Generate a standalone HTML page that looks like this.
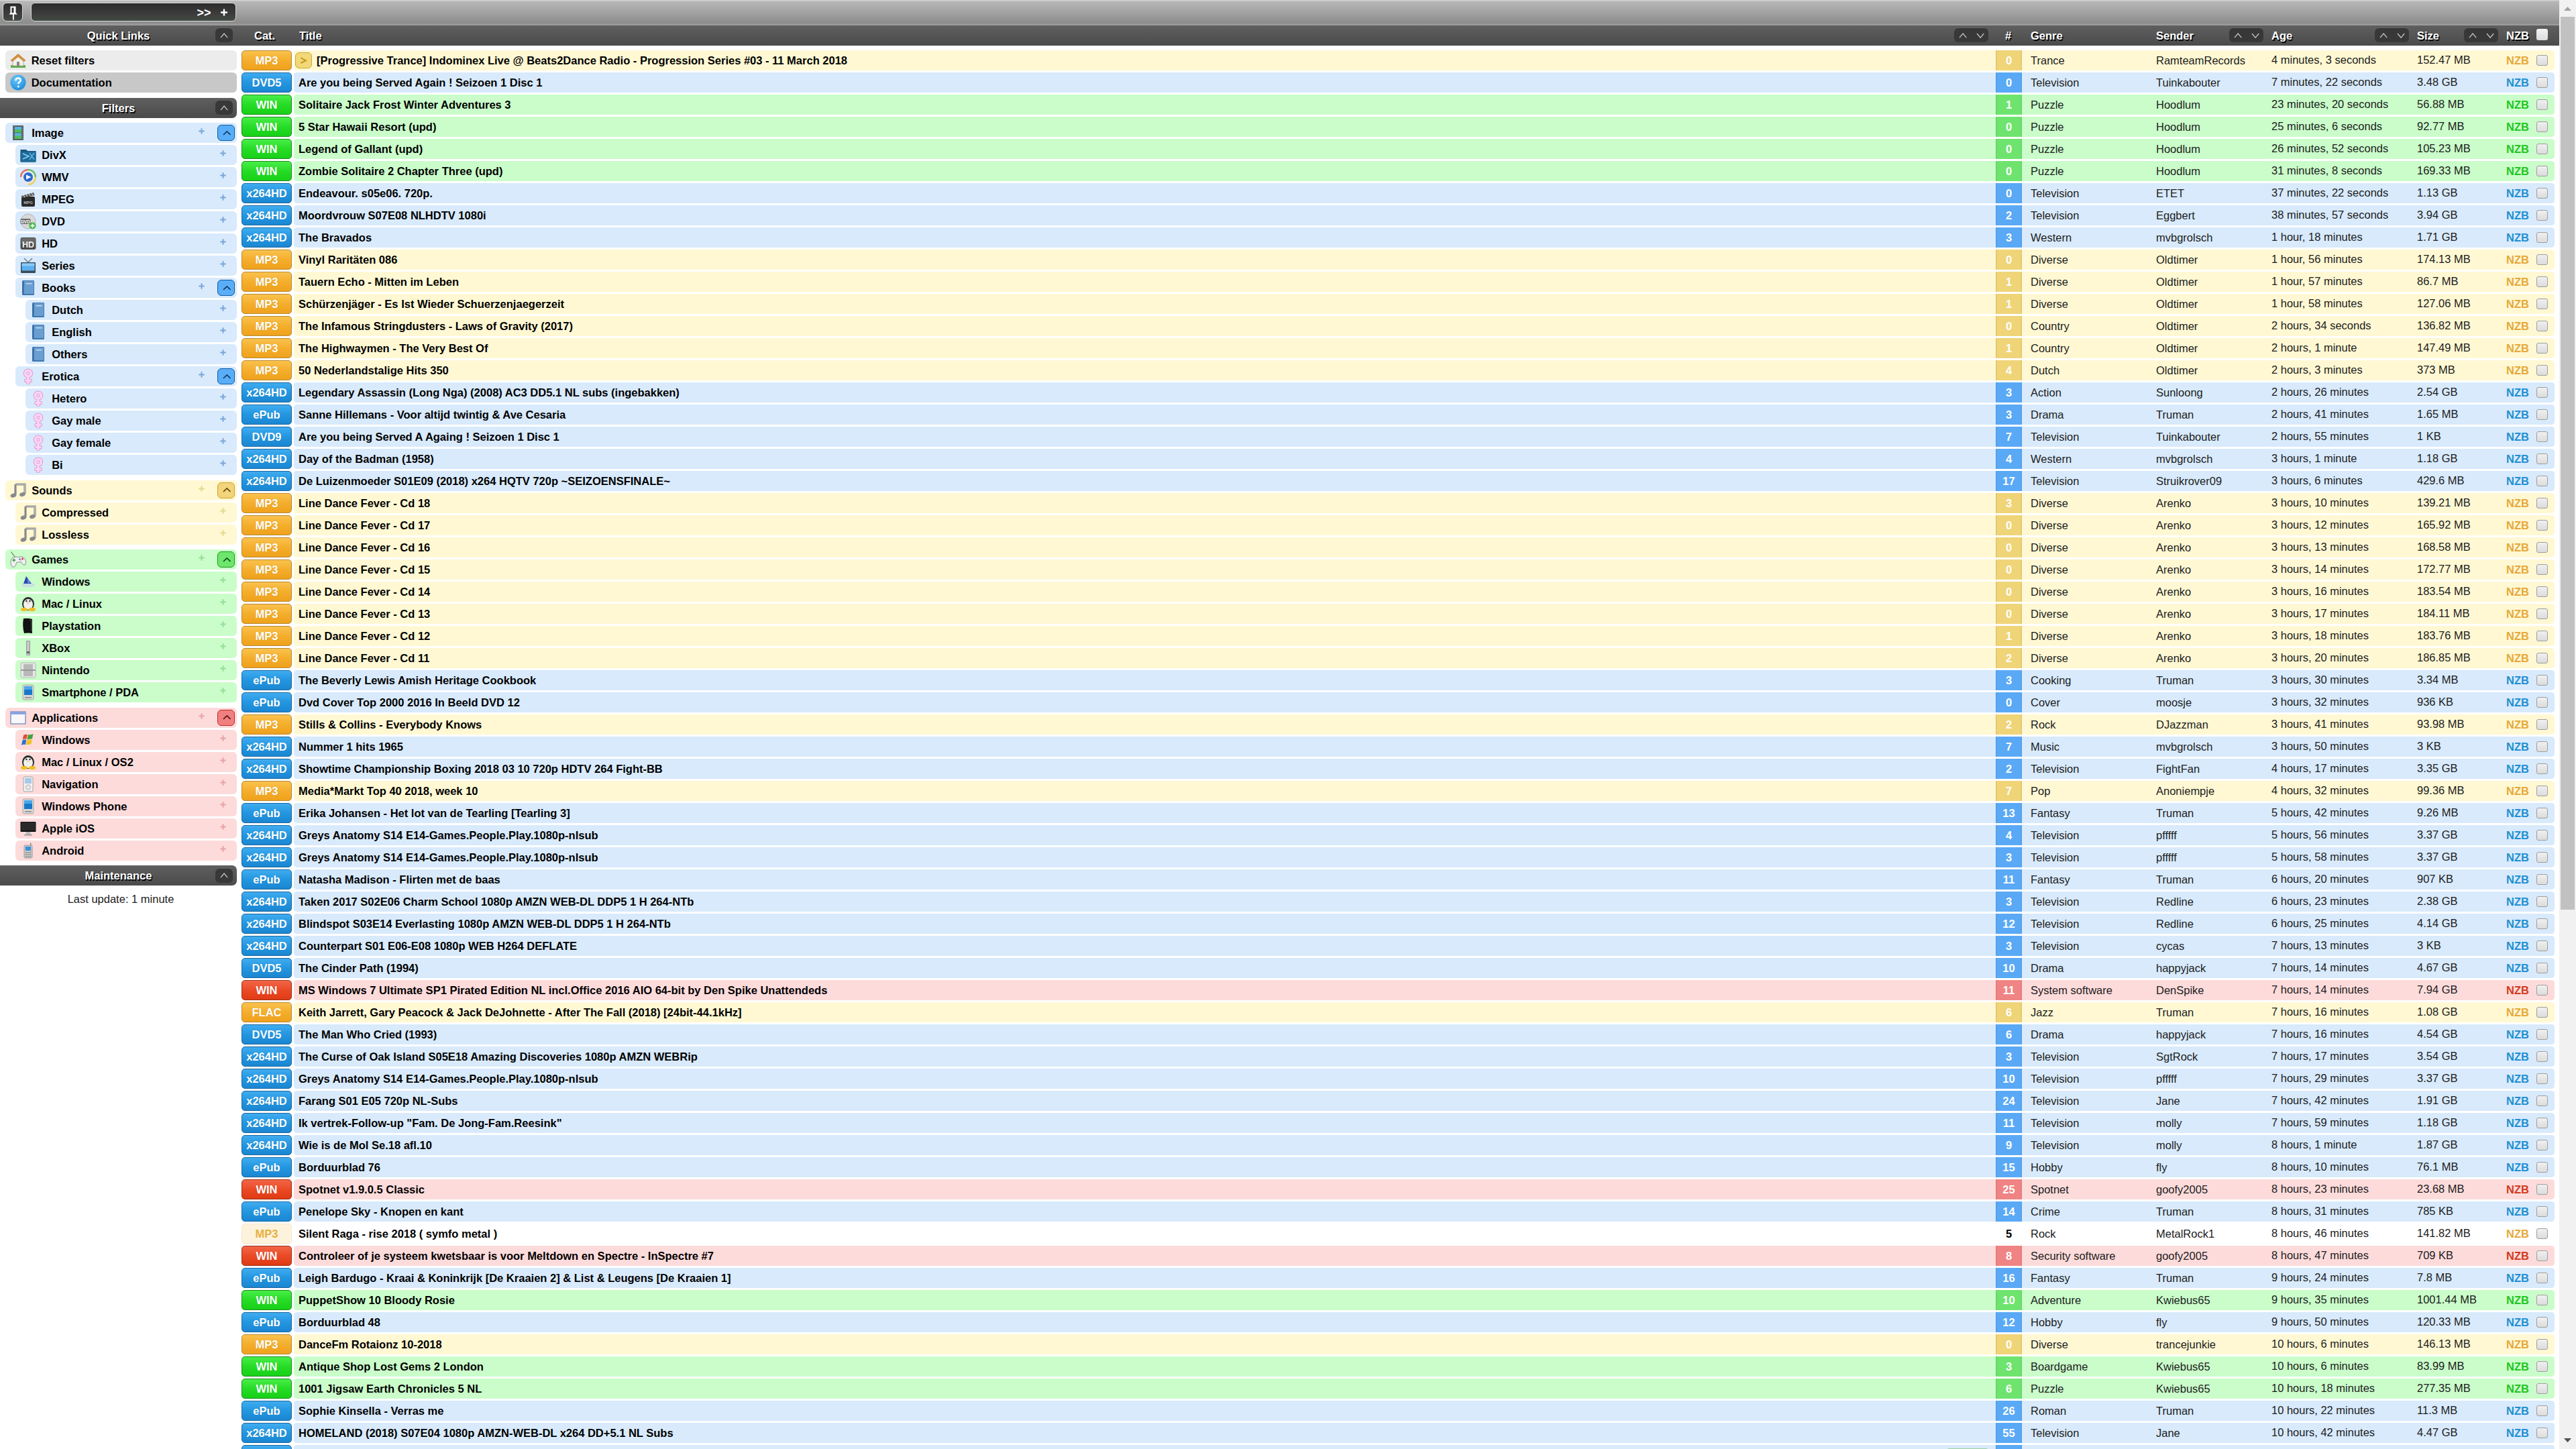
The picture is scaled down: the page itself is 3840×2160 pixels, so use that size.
<!DOCTYPE html><html><head><meta charset="utf-8"><style>
html,body{margin:0;padding:0;width:3840px;height:2160px;overflow:hidden;background:#fff;font-family:"Liberation Sans",sans-serif;}
.a{position:absolute}
#top{left:0;top:0;width:3815px;height:38px;background:linear-gradient(#dedede 0px,#b8b8b8 2px,#8c8c8c 35px,#9c9c9c 36px,#9a9a9a 38px)}
.tb{background:linear-gradient(#2c2c2c,#3c3c3c 60%,#434b43);border:1.5px solid #d4d6d4;border-radius:6px;box-sizing:border-box}
#hdr{left:0;top:38px;width:3815px;height:30px;background:linear-gradient(#5f5f5f,#4b4b4b)}
.ht{font-weight:bold;font-size:16.5px;line-height:30px;color:#fff;text-shadow:1.5px 1.5px 0 #000;white-space:nowrap}
.sb{background:#383838;border-radius:6px;height:21px;top:42px}
.row{height:30px;border-radius:4.5px}
.t{font-size:16.5px;line-height:30px;white-space:nowrap;color:#000}
.tt{font-weight:bold}
.rt{color:#1c1c1c}
.bdg{left:360px;width:75px;height:30px;box-sizing:border-box;border-radius:5px;border:1.5px solid;text-align:center;font-weight:bold;font-size:16.5px;line-height:29px;color:#fff;text-shadow:0 0 1px rgba(0,0,0,.2)}
.bo{background:linear-gradient(#fac24e,#f4ae2c 50%,#efa11c);border-color:#b88a34}
.bb{background:linear-gradient(#40acf0,#2396e0 50%,#1b86d2);border-color:#1a68a0}
.bg{background:linear-gradient(#48ee48,#26dc26 50%,#18d018);border-color:#1c8c1c}
.br{background:linear-gradient(#f26648,#ea4a26 50%,#e03a12);border-color:#9c3018}
.bw{background:#fdf2dc;border-color:#f5e6c8;color:#e8b040;text-shadow:none}
.num{left:2975px;width:39px;height:30px;text-align:center;font-weight:bold;font-size:16.5px;line-height:30px;color:#fff;box-shadow:inset 1.5px 0 rgba(0,0,0,.07),inset -1.5px 0 rgba(0,0,0,.07)}
.nzb{left:3736px;font-weight:bold;font-size:16.5px;line-height:30px}
.cb{left:3781px;width:16.5px;height:16.5px;box-sizing:border-box;border:1.5px solid #9e9e9e;border-radius:3px;background:linear-gradient(#f0f0f0,#dcdcdc)}
.si{height:30px;border-radius:6px}
.st{font-weight:bold;font-size:16.5px;line-height:30px;color:#000;white-space:nowrap}
.ic{width:24px;height:24px}
.ic svg{display:block}
.plus{width:10px;height:10px}
.gbtn{width:26px;height:24px;box-sizing:border-box;border:1.8px solid;border-radius:6px}
.sh{background:linear-gradient(#5f5f5f,#4b4b4b);height:30px}
</style></head><body><div class="a" id="top"></div>
<div class="a tb" style="left:4px;top:4px;width:30px;height:28px"></div>
<svg class="a" style="left:12px;top:8px" width="16" height="22" viewBox="0 0 16 22"><path d="M3.5 1.5 H11.5 V11 L14 13.5 H1.5 L3.5 11Z" fill="#fff"/><rect x="5.5" y="3.5" width="3" height="7.5" fill="#333"/><rect x="7" y="13" width="1.8" height="8.5" fill="#fff"/></svg>
<div class="a tb" style="left:46px;top:4px;width:306px;height:28px"></div>
<div class="a" style="left:293.5px;top:5px;font-weight:bold;font-size:18px;line-height:28px;color:#fff">&gt;&gt;</div>
<svg class="a" style="left:328px;top:13px" width="12" height="11" viewBox="0 0 12 11"><path d="M6 0.5 V10.5 M1 5.5 H11" stroke="#fff" stroke-width="2.4"/></svg>
<div class="a" id="hdr"></div>
<div class="a ht" style="left:0;top:38px;width:353px;text-align:center">Quick Links</div>
<div class="a sb" style="left:321px;width:26px"></div>
<svg class="a" style="left:327.8px;top:48.6px" width="12.2" height="8.2" viewBox="-1 -1 12.2 8.2"><path d="M0 6.2 L5.1 0 L10.2 6.2" fill="none" stroke="#c4c4c4" stroke-width="1.3"/></svg>
<div class="a ht" style="left:379px;top:38px">Cat.</div>
<div class="a ht" style="left:446px;top:38px">Title</div>
<div class="a sb" style="left:2913px;width:51px"></div>
<svg class="a" style="left:2919.5px;top:48.6px" width="12.3" height="8.2" viewBox="-1 -1 12.3 8.2"><path d="M0 6.2 L5.15 0 L10.3 6.2" fill="none" stroke="#c4c4c4" stroke-width="1.3"/></svg>
<svg class="a" style="left:2946px;top:48.6px" width="12.3" height="8.2" viewBox="-1 -1 12.3 8.2"><path d="M0 0 L5.15 6.2 L10.3 0" fill="none" stroke="#c4c4c4" stroke-width="1.3"/></svg>
<div class="a sb" style="left:3323px;width:51px"></div>
<svg class="a" style="left:3329.5px;top:48.6px" width="12.3" height="8.2" viewBox="-1 -1 12.3 8.2"><path d="M0 6.2 L5.15 0 L10.3 6.2" fill="none" stroke="#c4c4c4" stroke-width="1.3"/></svg>
<svg class="a" style="left:3356px;top:48.6px" width="12.3" height="8.2" viewBox="-1 -1 12.3 8.2"><path d="M0 0 L5.15 6.2 L10.3 0" fill="none" stroke="#c4c4c4" stroke-width="1.3"/></svg>
<div class="a sb" style="left:3540px;width:51px"></div>
<svg class="a" style="left:3546.5px;top:48.6px" width="12.3" height="8.2" viewBox="-1 -1 12.3 8.2"><path d="M0 6.2 L5.15 0 L10.3 6.2" fill="none" stroke="#c4c4c4" stroke-width="1.3"/></svg>
<svg class="a" style="left:3573px;top:48.6px" width="12.3" height="8.2" viewBox="-1 -1 12.3 8.2"><path d="M0 0 L5.15 6.2 L10.3 0" fill="none" stroke="#c4c4c4" stroke-width="1.3"/></svg>
<div class="a sb" style="left:3673px;width:51px"></div>
<svg class="a" style="left:3679.5px;top:48.6px" width="12.3" height="8.2" viewBox="-1 -1 12.3 8.2"><path d="M0 6.2 L5.15 0 L10.3 6.2" fill="none" stroke="#c4c4c4" stroke-width="1.3"/></svg>
<svg class="a" style="left:3706px;top:48.6px" width="12.3" height="8.2" viewBox="-1 -1 12.3 8.2"><path d="M0 0 L5.15 6.2 L10.3 0" fill="none" stroke="#c4c4c4" stroke-width="1.3"/></svg>
<div class="a ht" style="left:2989px;top:38px">#</div>
<div class="a ht" style="left:3027px;top:38px">Genre</div>
<div class="a ht" style="left:3214px;top:38px">Sender</div>
<div class="a ht" style="left:3386px;top:38px">Age</div>
<div class="a ht" style="left:3603px;top:38px">Size</div>
<div class="a ht" style="left:3736px;top:38px">NZB</div>
<div class="a" style="left:3781px;top:43px;width:16.5px;height:16.5px;border-radius:3px;background:linear-gradient(#f4f4f4,#dadada)"></div>
<div class="a row" style="left:438px;top:75px;width:3370px;background:#fff8d3"></div>
<div class="a bdg bo" style="top:75px">MP3</div>
<div class="a" style="left:440px;top:78px;width:25px;height:24px;box-sizing:border-box;border:1.5px solid #c9a92a;border-radius:6px;background:#f2d878"></div>
<svg class="a" style="left:446px;top:84px" width="13" height="12" viewBox="0 0 13 12"><path d="M2.4 2.4 L10 6.2 L2.4 10" fill="none" stroke="#c39a1e" stroke-width="2"/></svg>
<div class="a t tt" style="left:472px;top:75px">[Progressive Trance] Indominex Live @ Beats2Dance Radio - Progression Series #03 - 11 March 2018</div>
<div class="a num" style="top:75px;background:#f0d478">0</div>
<div class="a t rt" style="left:3027px;top:75px">Trance</div>
<div class="a t rt" style="left:3214px;top:75px">RamteamRecords</div>
<div class="a t rt" style="left:3386px;top:74px">4 minutes, 3 seconds</div>
<div class="a t rt" style="left:3603px;top:74px">152.47 MB</div>
<div class="a nzb" style="top:75px;color:#e6a83a">NZB</div>
<div class="a cb" style="top:81.5px"></div>
<div class="a row" style="left:438px;top:108px;width:3370px;background:#d8eafc"></div>
<div class="a bdg bb" style="top:108px">DVD5</div>
<div class="a t tt" style="left:445px;top:108px">Are you being Served Again ! Seizoen 1 Disc 1</div>
<div class="a num" style="top:108px;background:#5aa9f6">0</div>
<div class="a t rt" style="left:3027px;top:108px">Television</div>
<div class="a t rt" style="left:3214px;top:108px">Tuinkabouter</div>
<div class="a t rt" style="left:3386px;top:107px">7 minutes, 22 seconds</div>
<div class="a t rt" style="left:3603px;top:107px">3.48 GB</div>
<div class="a nzb" style="top:108px;color:#1f8fd2">NZB</div>
<div class="a cb" style="top:114.5px"></div>
<div class="a row" style="left:438px;top:141px;width:3370px;background:#cafdca"></div>
<div class="a bdg bg" style="top:141px">WIN</div>
<div class="a t tt" style="left:445px;top:141px">Solitaire Jack Frost Winter Adventures 3</div>
<div class="a num" style="top:141px;background:#6ee46e">1</div>
<div class="a t rt" style="left:3027px;top:141px">Puzzle</div>
<div class="a t rt" style="left:3214px;top:141px">Hoodlum</div>
<div class="a t rt" style="left:3386px;top:140px">23 minutes, 20 seconds</div>
<div class="a t rt" style="left:3603px;top:140px">56.88 MB</div>
<div class="a nzb" style="top:141px;color:#21c621">NZB</div>
<div class="a cb" style="top:147.5px"></div>
<div class="a row" style="left:438px;top:174px;width:3370px;background:#cafdca"></div>
<div class="a bdg bg" style="top:174px">WIN</div>
<div class="a t tt" style="left:445px;top:174px">5 Star Hawaii Resort (upd)</div>
<div class="a num" style="top:174px;background:#6ee46e">0</div>
<div class="a t rt" style="left:3027px;top:174px">Puzzle</div>
<div class="a t rt" style="left:3214px;top:174px">Hoodlum</div>
<div class="a t rt" style="left:3386px;top:173px">25 minutes, 6 seconds</div>
<div class="a t rt" style="left:3603px;top:173px">92.77 MB</div>
<div class="a nzb" style="top:174px;color:#21c621">NZB</div>
<div class="a cb" style="top:180.5px"></div>
<div class="a row" style="left:438px;top:207px;width:3370px;background:#cafdca"></div>
<div class="a bdg bg" style="top:207px">WIN</div>
<div class="a t tt" style="left:445px;top:207px">Legend of Gallant (upd)</div>
<div class="a num" style="top:207px;background:#6ee46e">0</div>
<div class="a t rt" style="left:3027px;top:207px">Puzzle</div>
<div class="a t rt" style="left:3214px;top:207px">Hoodlum</div>
<div class="a t rt" style="left:3386px;top:206px">26 minutes, 52 seconds</div>
<div class="a t rt" style="left:3603px;top:206px">105.23 MB</div>
<div class="a nzb" style="top:207px;color:#21c621">NZB</div>
<div class="a cb" style="top:213.5px"></div>
<div class="a row" style="left:438px;top:240px;width:3370px;background:#cafdca"></div>
<div class="a bdg bg" style="top:240px">WIN</div>
<div class="a t tt" style="left:445px;top:240px">Zombie Solitaire 2 Chapter Three (upd)</div>
<div class="a num" style="top:240px;background:#6ee46e">0</div>
<div class="a t rt" style="left:3027px;top:240px">Puzzle</div>
<div class="a t rt" style="left:3214px;top:240px">Hoodlum</div>
<div class="a t rt" style="left:3386px;top:239px">31 minutes, 8 seconds</div>
<div class="a t rt" style="left:3603px;top:239px">169.33 MB</div>
<div class="a nzb" style="top:240px;color:#21c621">NZB</div>
<div class="a cb" style="top:246.5px"></div>
<div class="a row" style="left:438px;top:273px;width:3370px;background:#d8eafc"></div>
<div class="a bdg bb" style="top:273px">x264HD</div>
<div class="a t tt" style="left:445px;top:273px">Endeavour. s05e06. 720p.</div>
<div class="a num" style="top:273px;background:#5aa9f6">0</div>
<div class="a t rt" style="left:3027px;top:273px">Television</div>
<div class="a t rt" style="left:3214px;top:273px">ETET</div>
<div class="a t rt" style="left:3386px;top:272px">37 minutes, 22 seconds</div>
<div class="a t rt" style="left:3603px;top:272px">1.13 GB</div>
<div class="a nzb" style="top:273px;color:#1f8fd2">NZB</div>
<div class="a cb" style="top:279.5px"></div>
<div class="a row" style="left:438px;top:306px;width:3370px;background:#d8eafc"></div>
<div class="a bdg bb" style="top:306px">x264HD</div>
<div class="a t tt" style="left:445px;top:306px">Moordvrouw S07E08 NLHDTV 1080i</div>
<div class="a num" style="top:306px;background:#5aa9f6">2</div>
<div class="a t rt" style="left:3027px;top:306px">Television</div>
<div class="a t rt" style="left:3214px;top:306px">Eggbert</div>
<div class="a t rt" style="left:3386px;top:305px">38 minutes, 57 seconds</div>
<div class="a t rt" style="left:3603px;top:305px">3.94 GB</div>
<div class="a nzb" style="top:306px;color:#1f8fd2">NZB</div>
<div class="a cb" style="top:312.5px"></div>
<div class="a row" style="left:438px;top:339px;width:3370px;background:#d8eafc"></div>
<div class="a bdg bb" style="top:339px">x264HD</div>
<div class="a t tt" style="left:445px;top:339px">The Bravados</div>
<div class="a num" style="top:339px;background:#5aa9f6">3</div>
<div class="a t rt" style="left:3027px;top:339px">Western</div>
<div class="a t rt" style="left:3214px;top:339px">mvbgrolsch</div>
<div class="a t rt" style="left:3386px;top:338px">1 hour, 18 minutes</div>
<div class="a t rt" style="left:3603px;top:338px">1.71 GB</div>
<div class="a nzb" style="top:339px;color:#1f8fd2">NZB</div>
<div class="a cb" style="top:345.5px"></div>
<div class="a row" style="left:438px;top:372px;width:3370px;background:#fff8d3"></div>
<div class="a bdg bo" style="top:372px">MP3</div>
<div class="a t tt" style="left:445px;top:372px">Vinyl Raritäten 086</div>
<div class="a num" style="top:372px;background:#f0d478">0</div>
<div class="a t rt" style="left:3027px;top:372px">Diverse</div>
<div class="a t rt" style="left:3214px;top:372px">Oldtimer</div>
<div class="a t rt" style="left:3386px;top:371px">1 hour, 56 minutes</div>
<div class="a t rt" style="left:3603px;top:371px">174.13 MB</div>
<div class="a nzb" style="top:372px;color:#e6a83a">NZB</div>
<div class="a cb" style="top:378.5px"></div>
<div class="a row" style="left:438px;top:405px;width:3370px;background:#fff8d3"></div>
<div class="a bdg bo" style="top:405px">MP3</div>
<div class="a t tt" style="left:445px;top:405px">Tauern Echo - Mitten im Leben</div>
<div class="a num" style="top:405px;background:#f0d478">1</div>
<div class="a t rt" style="left:3027px;top:405px">Diverse</div>
<div class="a t rt" style="left:3214px;top:405px">Oldtimer</div>
<div class="a t rt" style="left:3386px;top:404px">1 hour, 57 minutes</div>
<div class="a t rt" style="left:3603px;top:404px">86.7 MB</div>
<div class="a nzb" style="top:405px;color:#e6a83a">NZB</div>
<div class="a cb" style="top:411.5px"></div>
<div class="a row" style="left:438px;top:438px;width:3370px;background:#fff8d3"></div>
<div class="a bdg bo" style="top:438px">MP3</div>
<div class="a t tt" style="left:445px;top:438px">Schürzenjäger - Es Ist Wieder Schuerzenjaegerzeit</div>
<div class="a num" style="top:438px;background:#f0d478">1</div>
<div class="a t rt" style="left:3027px;top:438px">Diverse</div>
<div class="a t rt" style="left:3214px;top:438px">Oldtimer</div>
<div class="a t rt" style="left:3386px;top:437px">1 hour, 58 minutes</div>
<div class="a t rt" style="left:3603px;top:437px">127.06 MB</div>
<div class="a nzb" style="top:438px;color:#e6a83a">NZB</div>
<div class="a cb" style="top:444.5px"></div>
<div class="a row" style="left:438px;top:471px;width:3370px;background:#fff8d3"></div>
<div class="a bdg bo" style="top:471px">MP3</div>
<div class="a t tt" style="left:445px;top:471px">The Infamous Stringdusters - Laws of Gravity (2017)</div>
<div class="a num" style="top:471px;background:#f0d478">0</div>
<div class="a t rt" style="left:3027px;top:471px">Country</div>
<div class="a t rt" style="left:3214px;top:471px">Oldtimer</div>
<div class="a t rt" style="left:3386px;top:470px">2 hours, 34 seconds</div>
<div class="a t rt" style="left:3603px;top:470px">136.82 MB</div>
<div class="a nzb" style="top:471px;color:#e6a83a">NZB</div>
<div class="a cb" style="top:477.5px"></div>
<div class="a row" style="left:438px;top:504px;width:3370px;background:#fff8d3"></div>
<div class="a bdg bo" style="top:504px">MP3</div>
<div class="a t tt" style="left:445px;top:504px">The Highwaymen - The Very Best Of</div>
<div class="a num" style="top:504px;background:#f0d478">1</div>
<div class="a t rt" style="left:3027px;top:504px">Country</div>
<div class="a t rt" style="left:3214px;top:504px">Oldtimer</div>
<div class="a t rt" style="left:3386px;top:503px">2 hours, 1 minute</div>
<div class="a t rt" style="left:3603px;top:503px">147.49 MB</div>
<div class="a nzb" style="top:504px;color:#e6a83a">NZB</div>
<div class="a cb" style="top:510.5px"></div>
<div class="a row" style="left:438px;top:537px;width:3370px;background:#fff8d3"></div>
<div class="a bdg bo" style="top:537px">MP3</div>
<div class="a t tt" style="left:445px;top:537px">50 Nederlandstalige Hits 350</div>
<div class="a num" style="top:537px;background:#f0d478">4</div>
<div class="a t rt" style="left:3027px;top:537px">Dutch</div>
<div class="a t rt" style="left:3214px;top:537px">Oldtimer</div>
<div class="a t rt" style="left:3386px;top:536px">2 hours, 3 minutes</div>
<div class="a t rt" style="left:3603px;top:536px">373 MB</div>
<div class="a nzb" style="top:537px;color:#e6a83a">NZB</div>
<div class="a cb" style="top:543.5px"></div>
<div class="a row" style="left:438px;top:570px;width:3370px;background:#d8eafc"></div>
<div class="a bdg bb" style="top:570px">x264HD</div>
<div class="a t tt" style="left:445px;top:570px">Legendary Assassin (Long Nga) (2008) AC3 DD5.1 NL subs (ingebakken)</div>
<div class="a num" style="top:570px;background:#5aa9f6">3</div>
<div class="a t rt" style="left:3027px;top:570px">Action</div>
<div class="a t rt" style="left:3214px;top:570px">Sunloong</div>
<div class="a t rt" style="left:3386px;top:569px">2 hours, 26 minutes</div>
<div class="a t rt" style="left:3603px;top:569px">2.54 GB</div>
<div class="a nzb" style="top:570px;color:#1f8fd2">NZB</div>
<div class="a cb" style="top:576.5px"></div>
<div class="a row" style="left:438px;top:603px;width:3370px;background:#d8eafc"></div>
<div class="a bdg bb" style="top:603px">ePub</div>
<div class="a t tt" style="left:445px;top:603px">Sanne Hillemans - Voor altijd twintig &amp; Ave Cesaria</div>
<div class="a num" style="top:603px;background:#5aa9f6">3</div>
<div class="a t rt" style="left:3027px;top:603px">Drama</div>
<div class="a t rt" style="left:3214px;top:603px">Truman</div>
<div class="a t rt" style="left:3386px;top:602px">2 hours, 41 minutes</div>
<div class="a t rt" style="left:3603px;top:602px">1.65 MB</div>
<div class="a nzb" style="top:603px;color:#1f8fd2">NZB</div>
<div class="a cb" style="top:609.5px"></div>
<div class="a row" style="left:438px;top:636px;width:3370px;background:#d8eafc"></div>
<div class="a bdg bb" style="top:636px">DVD9</div>
<div class="a t tt" style="left:445px;top:636px">Are you being Served A Againg ! Seizoen 1 Disc 1</div>
<div class="a num" style="top:636px;background:#5aa9f6">7</div>
<div class="a t rt" style="left:3027px;top:636px">Television</div>
<div class="a t rt" style="left:3214px;top:636px">Tuinkabouter</div>
<div class="a t rt" style="left:3386px;top:635px">2 hours, 55 minutes</div>
<div class="a t rt" style="left:3603px;top:635px">1 KB</div>
<div class="a nzb" style="top:636px;color:#1f8fd2">NZB</div>
<div class="a cb" style="top:642.5px"></div>
<div class="a row" style="left:438px;top:669px;width:3370px;background:#d8eafc"></div>
<div class="a bdg bb" style="top:669px">x264HD</div>
<div class="a t tt" style="left:445px;top:669px">Day of the Badman (1958)</div>
<div class="a num" style="top:669px;background:#5aa9f6">4</div>
<div class="a t rt" style="left:3027px;top:669px">Western</div>
<div class="a t rt" style="left:3214px;top:669px">mvbgrolsch</div>
<div class="a t rt" style="left:3386px;top:668px">3 hours, 1 minute</div>
<div class="a t rt" style="left:3603px;top:668px">1.18 GB</div>
<div class="a nzb" style="top:669px;color:#1f8fd2">NZB</div>
<div class="a cb" style="top:675.5px"></div>
<div class="a row" style="left:438px;top:702px;width:3370px;background:#d8eafc"></div>
<div class="a bdg bb" style="top:702px">x264HD</div>
<div class="a t tt" style="left:445px;top:702px">De Luizenmoeder S01E09 (2018) x264 HQTV 720p ~SEIZOENSFINALE~</div>
<div class="a num" style="top:702px;background:#5aa9f6">17</div>
<div class="a t rt" style="left:3027px;top:702px">Television</div>
<div class="a t rt" style="left:3214px;top:702px">Struikrover09</div>
<div class="a t rt" style="left:3386px;top:701px">3 hours, 6 minutes</div>
<div class="a t rt" style="left:3603px;top:701px">429.6 MB</div>
<div class="a nzb" style="top:702px;color:#1f8fd2">NZB</div>
<div class="a cb" style="top:708.5px"></div>
<div class="a row" style="left:438px;top:735px;width:3370px;background:#fff8d3"></div>
<div class="a bdg bo" style="top:735px">MP3</div>
<div class="a t tt" style="left:445px;top:735px">Line Dance Fever - Cd 18</div>
<div class="a num" style="top:735px;background:#f0d478">3</div>
<div class="a t rt" style="left:3027px;top:735px">Diverse</div>
<div class="a t rt" style="left:3214px;top:735px">Arenko</div>
<div class="a t rt" style="left:3386px;top:734px">3 hours, 10 minutes</div>
<div class="a t rt" style="left:3603px;top:734px">139.21 MB</div>
<div class="a nzb" style="top:735px;color:#e6a83a">NZB</div>
<div class="a cb" style="top:741.5px"></div>
<div class="a row" style="left:438px;top:768px;width:3370px;background:#fff8d3"></div>
<div class="a bdg bo" style="top:768px">MP3</div>
<div class="a t tt" style="left:445px;top:768px">Line Dance Fever - Cd 17</div>
<div class="a num" style="top:768px;background:#f0d478">0</div>
<div class="a t rt" style="left:3027px;top:768px">Diverse</div>
<div class="a t rt" style="left:3214px;top:768px">Arenko</div>
<div class="a t rt" style="left:3386px;top:767px">3 hours, 12 minutes</div>
<div class="a t rt" style="left:3603px;top:767px">165.92 MB</div>
<div class="a nzb" style="top:768px;color:#e6a83a">NZB</div>
<div class="a cb" style="top:774.5px"></div>
<div class="a row" style="left:438px;top:801px;width:3370px;background:#fff8d3"></div>
<div class="a bdg bo" style="top:801px">MP3</div>
<div class="a t tt" style="left:445px;top:801px">Line Dance Fever - Cd 16</div>
<div class="a num" style="top:801px;background:#f0d478">0</div>
<div class="a t rt" style="left:3027px;top:801px">Diverse</div>
<div class="a t rt" style="left:3214px;top:801px">Arenko</div>
<div class="a t rt" style="left:3386px;top:800px">3 hours, 13 minutes</div>
<div class="a t rt" style="left:3603px;top:800px">168.58 MB</div>
<div class="a nzb" style="top:801px;color:#e6a83a">NZB</div>
<div class="a cb" style="top:807.5px"></div>
<div class="a row" style="left:438px;top:834px;width:3370px;background:#fff8d3"></div>
<div class="a bdg bo" style="top:834px">MP3</div>
<div class="a t tt" style="left:445px;top:834px">Line Dance Fever - Cd 15</div>
<div class="a num" style="top:834px;background:#f0d478">0</div>
<div class="a t rt" style="left:3027px;top:834px">Diverse</div>
<div class="a t rt" style="left:3214px;top:834px">Arenko</div>
<div class="a t rt" style="left:3386px;top:833px">3 hours, 14 minutes</div>
<div class="a t rt" style="left:3603px;top:833px">172.77 MB</div>
<div class="a nzb" style="top:834px;color:#e6a83a">NZB</div>
<div class="a cb" style="top:840.5px"></div>
<div class="a row" style="left:438px;top:867px;width:3370px;background:#fff8d3"></div>
<div class="a bdg bo" style="top:867px">MP3</div>
<div class="a t tt" style="left:445px;top:867px">Line Dance Fever - Cd 14</div>
<div class="a num" style="top:867px;background:#f0d478">0</div>
<div class="a t rt" style="left:3027px;top:867px">Diverse</div>
<div class="a t rt" style="left:3214px;top:867px">Arenko</div>
<div class="a t rt" style="left:3386px;top:866px">3 hours, 16 minutes</div>
<div class="a t rt" style="left:3603px;top:866px">183.54 MB</div>
<div class="a nzb" style="top:867px;color:#e6a83a">NZB</div>
<div class="a cb" style="top:873.5px"></div>
<div class="a row" style="left:438px;top:900px;width:3370px;background:#fff8d3"></div>
<div class="a bdg bo" style="top:900px">MP3</div>
<div class="a t tt" style="left:445px;top:900px">Line Dance Fever - Cd 13</div>
<div class="a num" style="top:900px;background:#f0d478">0</div>
<div class="a t rt" style="left:3027px;top:900px">Diverse</div>
<div class="a t rt" style="left:3214px;top:900px">Arenko</div>
<div class="a t rt" style="left:3386px;top:899px">3 hours, 17 minutes</div>
<div class="a t rt" style="left:3603px;top:899px">184.11 MB</div>
<div class="a nzb" style="top:900px;color:#e6a83a">NZB</div>
<div class="a cb" style="top:906.5px"></div>
<div class="a row" style="left:438px;top:933px;width:3370px;background:#fff8d3"></div>
<div class="a bdg bo" style="top:933px">MP3</div>
<div class="a t tt" style="left:445px;top:933px">Line Dance Fever - Cd 12</div>
<div class="a num" style="top:933px;background:#f0d478">1</div>
<div class="a t rt" style="left:3027px;top:933px">Diverse</div>
<div class="a t rt" style="left:3214px;top:933px">Arenko</div>
<div class="a t rt" style="left:3386px;top:932px">3 hours, 18 minutes</div>
<div class="a t rt" style="left:3603px;top:932px">183.76 MB</div>
<div class="a nzb" style="top:933px;color:#e6a83a">NZB</div>
<div class="a cb" style="top:939.5px"></div>
<div class="a row" style="left:438px;top:966px;width:3370px;background:#fff8d3"></div>
<div class="a bdg bo" style="top:966px">MP3</div>
<div class="a t tt" style="left:445px;top:966px">Line Dance Fever - Cd 11</div>
<div class="a num" style="top:966px;background:#f0d478">2</div>
<div class="a t rt" style="left:3027px;top:966px">Diverse</div>
<div class="a t rt" style="left:3214px;top:966px">Arenko</div>
<div class="a t rt" style="left:3386px;top:965px">3 hours, 20 minutes</div>
<div class="a t rt" style="left:3603px;top:965px">186.85 MB</div>
<div class="a nzb" style="top:966px;color:#e6a83a">NZB</div>
<div class="a cb" style="top:972.5px"></div>
<div class="a row" style="left:438px;top:999px;width:3370px;background:#d8eafc"></div>
<div class="a bdg bb" style="top:999px">ePub</div>
<div class="a t tt" style="left:445px;top:999px">The Beverly Lewis Amish Heritage Cookbook</div>
<div class="a num" style="top:999px;background:#5aa9f6">3</div>
<div class="a t rt" style="left:3027px;top:999px">Cooking</div>
<div class="a t rt" style="left:3214px;top:999px">Truman</div>
<div class="a t rt" style="left:3386px;top:998px">3 hours, 30 minutes</div>
<div class="a t rt" style="left:3603px;top:998px">3.34 MB</div>
<div class="a nzb" style="top:999px;color:#1f8fd2">NZB</div>
<div class="a cb" style="top:1005.5px"></div>
<div class="a row" style="left:438px;top:1032px;width:3370px;background:#d8eafc"></div>
<div class="a bdg bb" style="top:1032px">ePub</div>
<div class="a t tt" style="left:445px;top:1032px">Dvd Cover Top 2000 2016 In Beeld DVD 12</div>
<div class="a num" style="top:1032px;background:#5aa9f6">0</div>
<div class="a t rt" style="left:3027px;top:1032px">Cover</div>
<div class="a t rt" style="left:3214px;top:1032px">moosje</div>
<div class="a t rt" style="left:3386px;top:1031px">3 hours, 32 minutes</div>
<div class="a t rt" style="left:3603px;top:1031px">936 KB</div>
<div class="a nzb" style="top:1032px;color:#1f8fd2">NZB</div>
<div class="a cb" style="top:1038.5px"></div>
<div class="a row" style="left:438px;top:1065px;width:3370px;background:#fff8d3"></div>
<div class="a bdg bo" style="top:1065px">MP3</div>
<div class="a t tt" style="left:445px;top:1065px">Stills &amp; Collins - Everybody Knows</div>
<div class="a num" style="top:1065px;background:#f0d478">2</div>
<div class="a t rt" style="left:3027px;top:1065px">Rock</div>
<div class="a t rt" style="left:3214px;top:1065px">DJazzman</div>
<div class="a t rt" style="left:3386px;top:1064px">3 hours, 41 minutes</div>
<div class="a t rt" style="left:3603px;top:1064px">93.98 MB</div>
<div class="a nzb" style="top:1065px;color:#e6a83a">NZB</div>
<div class="a cb" style="top:1071.5px"></div>
<div class="a row" style="left:438px;top:1098px;width:3370px;background:#d8eafc"></div>
<div class="a bdg bb" style="top:1098px">x264HD</div>
<div class="a t tt" style="left:445px;top:1098px">Nummer 1 hits 1965</div>
<div class="a num" style="top:1098px;background:#5aa9f6">7</div>
<div class="a t rt" style="left:3027px;top:1098px">Music</div>
<div class="a t rt" style="left:3214px;top:1098px">mvbgrolsch</div>
<div class="a t rt" style="left:3386px;top:1097px">3 hours, 50 minutes</div>
<div class="a t rt" style="left:3603px;top:1097px">3 KB</div>
<div class="a nzb" style="top:1098px;color:#1f8fd2">NZB</div>
<div class="a cb" style="top:1104.5px"></div>
<div class="a row" style="left:438px;top:1131px;width:3370px;background:#d8eafc"></div>
<div class="a bdg bb" style="top:1131px">x264HD</div>
<div class="a t tt" style="left:445px;top:1131px">Showtime Championship Boxing 2018 03 10 720p HDTV 264 Fight-BB</div>
<div class="a num" style="top:1131px;background:#5aa9f6">2</div>
<div class="a t rt" style="left:3027px;top:1131px">Television</div>
<div class="a t rt" style="left:3214px;top:1131px">FightFan</div>
<div class="a t rt" style="left:3386px;top:1130px">4 hours, 17 minutes</div>
<div class="a t rt" style="left:3603px;top:1130px">3.35 GB</div>
<div class="a nzb" style="top:1131px;color:#1f8fd2">NZB</div>
<div class="a cb" style="top:1137.5px"></div>
<div class="a row" style="left:438px;top:1164px;width:3370px;background:#fff8d3"></div>
<div class="a bdg bo" style="top:1164px">MP3</div>
<div class="a t tt" style="left:445px;top:1164px">Media*Markt Top 40 2018, week 10</div>
<div class="a num" style="top:1164px;background:#f0d478">7</div>
<div class="a t rt" style="left:3027px;top:1164px">Pop</div>
<div class="a t rt" style="left:3214px;top:1164px">Anoniempje</div>
<div class="a t rt" style="left:3386px;top:1163px">4 hours, 32 minutes</div>
<div class="a t rt" style="left:3603px;top:1163px">99.36 MB</div>
<div class="a nzb" style="top:1164px;color:#e6a83a">NZB</div>
<div class="a cb" style="top:1170.5px"></div>
<div class="a row" style="left:438px;top:1197px;width:3370px;background:#d8eafc"></div>
<div class="a bdg bb" style="top:1197px">ePub</div>
<div class="a t tt" style="left:445px;top:1197px">Erika Johansen - Het lot van de Tearling [Tearling 3]</div>
<div class="a num" style="top:1197px;background:#5aa9f6">13</div>
<div class="a t rt" style="left:3027px;top:1197px">Fantasy</div>
<div class="a t rt" style="left:3214px;top:1197px">Truman</div>
<div class="a t rt" style="left:3386px;top:1196px">5 hours, 42 minutes</div>
<div class="a t rt" style="left:3603px;top:1196px">9.26 MB</div>
<div class="a nzb" style="top:1197px;color:#1f8fd2">NZB</div>
<div class="a cb" style="top:1203.5px"></div>
<div class="a row" style="left:438px;top:1230px;width:3370px;background:#d8eafc"></div>
<div class="a bdg bb" style="top:1230px">x264HD</div>
<div class="a t tt" style="left:445px;top:1230px">Greys Anatomy S14 E14-Games.People.Play.1080p-nlsub</div>
<div class="a num" style="top:1230px;background:#5aa9f6">4</div>
<div class="a t rt" style="left:3027px;top:1230px">Television</div>
<div class="a t rt" style="left:3214px;top:1230px">pfffff</div>
<div class="a t rt" style="left:3386px;top:1229px">5 hours, 56 minutes</div>
<div class="a t rt" style="left:3603px;top:1229px">3.37 GB</div>
<div class="a nzb" style="top:1230px;color:#1f8fd2">NZB</div>
<div class="a cb" style="top:1236.5px"></div>
<div class="a row" style="left:438px;top:1263px;width:3370px;background:#d8eafc"></div>
<div class="a bdg bb" style="top:1263px">x264HD</div>
<div class="a t tt" style="left:445px;top:1263px">Greys Anatomy S14 E14-Games.People.Play.1080p-nlsub</div>
<div class="a num" style="top:1263px;background:#5aa9f6">3</div>
<div class="a t rt" style="left:3027px;top:1263px">Television</div>
<div class="a t rt" style="left:3214px;top:1263px">pfffff</div>
<div class="a t rt" style="left:3386px;top:1262px">5 hours, 58 minutes</div>
<div class="a t rt" style="left:3603px;top:1262px">3.37 GB</div>
<div class="a nzb" style="top:1263px;color:#1f8fd2">NZB</div>
<div class="a cb" style="top:1269.5px"></div>
<div class="a row" style="left:438px;top:1296px;width:3370px;background:#d8eafc"></div>
<div class="a bdg bb" style="top:1296px">ePub</div>
<div class="a t tt" style="left:445px;top:1296px">Natasha Madison - Flirten met de baas</div>
<div class="a num" style="top:1296px;background:#5aa9f6">11</div>
<div class="a t rt" style="left:3027px;top:1296px">Fantasy</div>
<div class="a t rt" style="left:3214px;top:1296px">Truman</div>
<div class="a t rt" style="left:3386px;top:1295px">6 hours, 20 minutes</div>
<div class="a t rt" style="left:3603px;top:1295px">907 KB</div>
<div class="a nzb" style="top:1296px;color:#1f8fd2">NZB</div>
<div class="a cb" style="top:1302.5px"></div>
<div class="a row" style="left:438px;top:1329px;width:3370px;background:#d8eafc"></div>
<div class="a bdg bb" style="top:1329px">x264HD</div>
<div class="a t tt" style="left:445px;top:1329px">Taken 2017 S02E06 Charm School 1080p AMZN WEB-DL DDP5 1 H 264-NTb</div>
<div class="a num" style="top:1329px;background:#5aa9f6">3</div>
<div class="a t rt" style="left:3027px;top:1329px">Television</div>
<div class="a t rt" style="left:3214px;top:1329px">Redline</div>
<div class="a t rt" style="left:3386px;top:1328px">6 hours, 23 minutes</div>
<div class="a t rt" style="left:3603px;top:1328px">2.38 GB</div>
<div class="a nzb" style="top:1329px;color:#1f8fd2">NZB</div>
<div class="a cb" style="top:1335.5px"></div>
<div class="a row" style="left:438px;top:1362px;width:3370px;background:#d8eafc"></div>
<div class="a bdg bb" style="top:1362px">x264HD</div>
<div class="a t tt" style="left:445px;top:1362px">Blindspot S03E14 Everlasting 1080p AMZN WEB-DL DDP5 1 H 264-NTb</div>
<div class="a num" style="top:1362px;background:#5aa9f6">12</div>
<div class="a t rt" style="left:3027px;top:1362px">Television</div>
<div class="a t rt" style="left:3214px;top:1362px">Redline</div>
<div class="a t rt" style="left:3386px;top:1361px">6 hours, 25 minutes</div>
<div class="a t rt" style="left:3603px;top:1361px">4.14 GB</div>
<div class="a nzb" style="top:1362px;color:#1f8fd2">NZB</div>
<div class="a cb" style="top:1368.5px"></div>
<div class="a row" style="left:438px;top:1395px;width:3370px;background:#d8eafc"></div>
<div class="a bdg bb" style="top:1395px">x264HD</div>
<div class="a t tt" style="left:445px;top:1395px">Counterpart S01 E06-E08 1080p WEB H264 DEFLATE</div>
<div class="a num" style="top:1395px;background:#5aa9f6">3</div>
<div class="a t rt" style="left:3027px;top:1395px">Television</div>
<div class="a t rt" style="left:3214px;top:1395px">cycas</div>
<div class="a t rt" style="left:3386px;top:1394px">7 hours, 13 minutes</div>
<div class="a t rt" style="left:3603px;top:1394px">3 KB</div>
<div class="a nzb" style="top:1395px;color:#1f8fd2">NZB</div>
<div class="a cb" style="top:1401.5px"></div>
<div class="a row" style="left:438px;top:1428px;width:3370px;background:#d8eafc"></div>
<div class="a bdg bb" style="top:1428px">DVD5</div>
<div class="a t tt" style="left:445px;top:1428px">The Cinder Path (1994)</div>
<div class="a num" style="top:1428px;background:#5aa9f6">10</div>
<div class="a t rt" style="left:3027px;top:1428px">Drama</div>
<div class="a t rt" style="left:3214px;top:1428px">happyjack</div>
<div class="a t rt" style="left:3386px;top:1427px">7 hours, 14 minutes</div>
<div class="a t rt" style="left:3603px;top:1427px">4.67 GB</div>
<div class="a nzb" style="top:1428px;color:#1f8fd2">NZB</div>
<div class="a cb" style="top:1434.5px"></div>
<div class="a row" style="left:438px;top:1461px;width:3370px;background:#fddbdb"></div>
<div class="a bdg br" style="top:1461px">WIN</div>
<div class="a t tt" style="left:445px;top:1461px">MS Windows 7 Ultimate SP1 Pirated Edition NL incl.Office 2016 AIO 64-bit by Den Spike Unattendeds</div>
<div class="a num" style="top:1461px;background:#f08484">11</div>
<div class="a t rt" style="left:3027px;top:1461px">System software</div>
<div class="a t rt" style="left:3214px;top:1461px">DenSpike</div>
<div class="a t rt" style="left:3386px;top:1460px">7 hours, 14 minutes</div>
<div class="a t rt" style="left:3603px;top:1460px">7.94 GB</div>
<div class="a nzb" style="top:1461px;color:#d23a1e">NZB</div>
<div class="a cb" style="top:1467.5px"></div>
<div class="a row" style="left:438px;top:1494px;width:3370px;background:#fff8d3"></div>
<div class="a bdg bo" style="top:1494px">FLAC</div>
<div class="a t tt" style="left:445px;top:1494px">Keith Jarrett, Gary Peacock &amp; Jack DeJohnette - After The Fall (2018) [24bit-44.1kHz]</div>
<div class="a num" style="top:1494px;background:#f0d478">6</div>
<div class="a t rt" style="left:3027px;top:1494px">Jazz</div>
<div class="a t rt" style="left:3214px;top:1494px">Truman</div>
<div class="a t rt" style="left:3386px;top:1493px">7 hours, 16 minutes</div>
<div class="a t rt" style="left:3603px;top:1493px">1.08 GB</div>
<div class="a nzb" style="top:1494px;color:#e6a83a">NZB</div>
<div class="a cb" style="top:1500.5px"></div>
<div class="a row" style="left:438px;top:1527px;width:3370px;background:#d8eafc"></div>
<div class="a bdg bb" style="top:1527px">DVD5</div>
<div class="a t tt" style="left:445px;top:1527px">The Man Who Cried (1993)</div>
<div class="a num" style="top:1527px;background:#5aa9f6">6</div>
<div class="a t rt" style="left:3027px;top:1527px">Drama</div>
<div class="a t rt" style="left:3214px;top:1527px">happyjack</div>
<div class="a t rt" style="left:3386px;top:1526px">7 hours, 16 minutes</div>
<div class="a t rt" style="left:3603px;top:1526px">4.54 GB</div>
<div class="a nzb" style="top:1527px;color:#1f8fd2">NZB</div>
<div class="a cb" style="top:1533.5px"></div>
<div class="a row" style="left:438px;top:1560px;width:3370px;background:#d8eafc"></div>
<div class="a bdg bb" style="top:1560px">x264HD</div>
<div class="a t tt" style="left:445px;top:1560px">The Curse of Oak Island S05E18 Amazing Discoveries 1080p AMZN WEBRip</div>
<div class="a num" style="top:1560px;background:#5aa9f6">3</div>
<div class="a t rt" style="left:3027px;top:1560px">Television</div>
<div class="a t rt" style="left:3214px;top:1560px">SgtRock</div>
<div class="a t rt" style="left:3386px;top:1559px">7 hours, 17 minutes</div>
<div class="a t rt" style="left:3603px;top:1559px">3.54 GB</div>
<div class="a nzb" style="top:1560px;color:#1f8fd2">NZB</div>
<div class="a cb" style="top:1566.5px"></div>
<div class="a row" style="left:438px;top:1593px;width:3370px;background:#d8eafc"></div>
<div class="a bdg bb" style="top:1593px">x264HD</div>
<div class="a t tt" style="left:445px;top:1593px">Greys Anatomy S14 E14-Games.People.Play.1080p-nlsub</div>
<div class="a num" style="top:1593px;background:#5aa9f6">10</div>
<div class="a t rt" style="left:3027px;top:1593px">Television</div>
<div class="a t rt" style="left:3214px;top:1593px">pfffff</div>
<div class="a t rt" style="left:3386px;top:1592px">7 hours, 29 minutes</div>
<div class="a t rt" style="left:3603px;top:1592px">3.37 GB</div>
<div class="a nzb" style="top:1593px;color:#1f8fd2">NZB</div>
<div class="a cb" style="top:1599.5px"></div>
<div class="a row" style="left:438px;top:1626px;width:3370px;background:#d8eafc"></div>
<div class="a bdg bb" style="top:1626px">x264HD</div>
<div class="a t tt" style="left:445px;top:1626px">Farang S01 E05 720p NL-Subs</div>
<div class="a num" style="top:1626px;background:#5aa9f6">24</div>
<div class="a t rt" style="left:3027px;top:1626px">Television</div>
<div class="a t rt" style="left:3214px;top:1626px">Jane</div>
<div class="a t rt" style="left:3386px;top:1625px">7 hours, 42 minutes</div>
<div class="a t rt" style="left:3603px;top:1625px">1.91 GB</div>
<div class="a nzb" style="top:1626px;color:#1f8fd2">NZB</div>
<div class="a cb" style="top:1632.5px"></div>
<div class="a row" style="left:438px;top:1659px;width:3370px;background:#d8eafc"></div>
<div class="a bdg bb" style="top:1659px">x264HD</div>
<div class="a t tt" style="left:445px;top:1659px">Ik vertrek-Follow-up &quot;Fam. De Jong-Fam.Reesink&quot;</div>
<div class="a num" style="top:1659px;background:#5aa9f6">11</div>
<div class="a t rt" style="left:3027px;top:1659px">Television</div>
<div class="a t rt" style="left:3214px;top:1659px">molly</div>
<div class="a t rt" style="left:3386px;top:1658px">7 hours, 59 minutes</div>
<div class="a t rt" style="left:3603px;top:1658px">1.18 GB</div>
<div class="a nzb" style="top:1659px;color:#1f8fd2">NZB</div>
<div class="a cb" style="top:1665.5px"></div>
<div class="a row" style="left:438px;top:1692px;width:3370px;background:#d8eafc"></div>
<div class="a bdg bb" style="top:1692px">x264HD</div>
<div class="a t tt" style="left:445px;top:1692px">Wie is de Mol Se.18 afl.10</div>
<div class="a num" style="top:1692px;background:#5aa9f6">9</div>
<div class="a t rt" style="left:3027px;top:1692px">Television</div>
<div class="a t rt" style="left:3214px;top:1692px">molly</div>
<div class="a t rt" style="left:3386px;top:1691px">8 hours, 1 minute</div>
<div class="a t rt" style="left:3603px;top:1691px">1.87 GB</div>
<div class="a nzb" style="top:1692px;color:#1f8fd2">NZB</div>
<div class="a cb" style="top:1698.5px"></div>
<div class="a row" style="left:438px;top:1725px;width:3370px;background:#d8eafc"></div>
<div class="a bdg bb" style="top:1725px">ePub</div>
<div class="a t tt" style="left:445px;top:1725px">Borduurblad 76</div>
<div class="a num" style="top:1725px;background:#5aa9f6">15</div>
<div class="a t rt" style="left:3027px;top:1725px">Hobby</div>
<div class="a t rt" style="left:3214px;top:1725px">fly</div>
<div class="a t rt" style="left:3386px;top:1724px">8 hours, 10 minutes</div>
<div class="a t rt" style="left:3603px;top:1724px">76.1 MB</div>
<div class="a nzb" style="top:1725px;color:#1f8fd2">NZB</div>
<div class="a cb" style="top:1731.5px"></div>
<div class="a row" style="left:438px;top:1758px;width:3370px;background:#fddbdb"></div>
<div class="a bdg br" style="top:1758px">WIN</div>
<div class="a t tt" style="left:445px;top:1758px">Spotnet v1.9.0.5 Classic</div>
<div class="a num" style="top:1758px;background:#f08484">25</div>
<div class="a t rt" style="left:3027px;top:1758px">Spotnet</div>
<div class="a t rt" style="left:3214px;top:1758px">goofy2005</div>
<div class="a t rt" style="left:3386px;top:1757px">8 hours, 23 minutes</div>
<div class="a t rt" style="left:3603px;top:1757px">23.68 MB</div>
<div class="a nzb" style="top:1758px;color:#d23a1e">NZB</div>
<div class="a cb" style="top:1764.5px"></div>
<div class="a row" style="left:438px;top:1791px;width:3370px;background:#d8eafc"></div>
<div class="a bdg bb" style="top:1791px">ePub</div>
<div class="a t tt" style="left:445px;top:1791px">Penelope Sky - Knopen en kant</div>
<div class="a num" style="top:1791px;background:#5aa9f6">14</div>
<div class="a t rt" style="left:3027px;top:1791px">Crime</div>
<div class="a t rt" style="left:3214px;top:1791px">Truman</div>
<div class="a t rt" style="left:3386px;top:1790px">8 hours, 31 minutes</div>
<div class="a t rt" style="left:3603px;top:1790px">785 KB</div>
<div class="a nzb" style="top:1791px;color:#1f8fd2">NZB</div>
<div class="a cb" style="top:1797.5px"></div>
<div class="a row" style="left:438px;top:1824px;width:3370px;background:#ffffff"></div>
<div class="a bdg bw" style="top:1824px">MP3</div>
<div class="a t tt" style="left:445px;top:1824px">Silent Raga - rise 2018 ( symfo metal )</div>
<div class="a num" style="top:1824px;background:transparent;color:#000;box-shadow:none">5</div>
<div class="a t rt" style="left:3027px;top:1824px">Rock</div>
<div class="a t rt" style="left:3214px;top:1824px">MetalRock1</div>
<div class="a t rt" style="left:3386px;top:1823px">8 hours, 46 minutes</div>
<div class="a t rt" style="left:3603px;top:1823px">141.82 MB</div>
<div class="a nzb" style="top:1824px;color:#e6a83a">NZB</div>
<div class="a cb" style="top:1830.5px"></div>
<div class="a row" style="left:438px;top:1857px;width:3370px;background:#fddbdb"></div>
<div class="a bdg br" style="top:1857px">WIN</div>
<div class="a t tt" style="left:445px;top:1857px">Controleer of je systeem kwetsbaar is voor Meltdown en Spectre - InSpectre #7</div>
<div class="a num" style="top:1857px;background:#f08484">8</div>
<div class="a t rt" style="left:3027px;top:1857px">Security software</div>
<div class="a t rt" style="left:3214px;top:1857px">goofy2005</div>
<div class="a t rt" style="left:3386px;top:1856px">8 hours, 47 minutes</div>
<div class="a t rt" style="left:3603px;top:1856px">709 KB</div>
<div class="a nzb" style="top:1857px;color:#d23a1e">NZB</div>
<div class="a cb" style="top:1863.5px"></div>
<div class="a row" style="left:438px;top:1890px;width:3370px;background:#d8eafc"></div>
<div class="a bdg bb" style="top:1890px">ePub</div>
<div class="a t tt" style="left:445px;top:1890px">Leigh Bardugo - Kraai &amp; Koninkrijk [De Kraaien 2] &amp; List &amp; Leugens [De Kraaien 1]</div>
<div class="a num" style="top:1890px;background:#5aa9f6">16</div>
<div class="a t rt" style="left:3027px;top:1890px">Fantasy</div>
<div class="a t rt" style="left:3214px;top:1890px">Truman</div>
<div class="a t rt" style="left:3386px;top:1889px">9 hours, 24 minutes</div>
<div class="a t rt" style="left:3603px;top:1889px">7.8 MB</div>
<div class="a nzb" style="top:1890px;color:#1f8fd2">NZB</div>
<div class="a cb" style="top:1896.5px"></div>
<div class="a row" style="left:438px;top:1923px;width:3370px;background:#cafdca"></div>
<div class="a bdg bg" style="top:1923px">WIN</div>
<div class="a t tt" style="left:445px;top:1923px">PuppetShow 10 Bloody Rosie</div>
<div class="a num" style="top:1923px;background:#6ee46e">10</div>
<div class="a t rt" style="left:3027px;top:1923px">Adventure</div>
<div class="a t rt" style="left:3214px;top:1923px">Kwiebus65</div>
<div class="a t rt" style="left:3386px;top:1922px">9 hours, 35 minutes</div>
<div class="a t rt" style="left:3603px;top:1922px">1001.44 MB</div>
<div class="a nzb" style="top:1923px;color:#21c621">NZB</div>
<div class="a cb" style="top:1929.5px"></div>
<div class="a row" style="left:438px;top:1956px;width:3370px;background:#d8eafc"></div>
<div class="a bdg bb" style="top:1956px">ePub</div>
<div class="a t tt" style="left:445px;top:1956px">Borduurblad 48</div>
<div class="a num" style="top:1956px;background:#5aa9f6">12</div>
<div class="a t rt" style="left:3027px;top:1956px">Hobby</div>
<div class="a t rt" style="left:3214px;top:1956px">fly</div>
<div class="a t rt" style="left:3386px;top:1955px">9 hours, 50 minutes</div>
<div class="a t rt" style="left:3603px;top:1955px">120.33 MB</div>
<div class="a nzb" style="top:1956px;color:#1f8fd2">NZB</div>
<div class="a cb" style="top:1962.5px"></div>
<div class="a row" style="left:438px;top:1989px;width:3370px;background:#fff8d3"></div>
<div class="a bdg bo" style="top:1989px">MP3</div>
<div class="a t tt" style="left:445px;top:1989px">DanceFm Rotaionz 10-2018</div>
<div class="a num" style="top:1989px;background:#f0d478">0</div>
<div class="a t rt" style="left:3027px;top:1989px">Diverse</div>
<div class="a t rt" style="left:3214px;top:1989px">trancejunkie</div>
<div class="a t rt" style="left:3386px;top:1988px">10 hours, 6 minutes</div>
<div class="a t rt" style="left:3603px;top:1988px">146.13 MB</div>
<div class="a nzb" style="top:1989px;color:#e6a83a">NZB</div>
<div class="a cb" style="top:1995.5px"></div>
<div class="a row" style="left:438px;top:2022px;width:3370px;background:#cafdca"></div>
<div class="a bdg bg" style="top:2022px">WIN</div>
<div class="a t tt" style="left:445px;top:2022px">Antique Shop Lost Gems 2 London</div>
<div class="a num" style="top:2022px;background:#6ee46e">3</div>
<div class="a t rt" style="left:3027px;top:2022px">Boardgame</div>
<div class="a t rt" style="left:3214px;top:2022px">Kwiebus65</div>
<div class="a t rt" style="left:3386px;top:2021px">10 hours, 6 minutes</div>
<div class="a t rt" style="left:3603px;top:2021px">83.99 MB</div>
<div class="a nzb" style="top:2022px;color:#21c621">NZB</div>
<div class="a cb" style="top:2028.5px"></div>
<div class="a row" style="left:438px;top:2055px;width:3370px;background:#cafdca"></div>
<div class="a bdg bg" style="top:2055px">WIN</div>
<div class="a t tt" style="left:445px;top:2055px">1001 Jigsaw Earth Chronicles 5 NL</div>
<div class="a num" style="top:2055px;background:#6ee46e">6</div>
<div class="a t rt" style="left:3027px;top:2055px">Puzzle</div>
<div class="a t rt" style="left:3214px;top:2055px">Kwiebus65</div>
<div class="a t rt" style="left:3386px;top:2054px">10 hours, 18 minutes</div>
<div class="a t rt" style="left:3603px;top:2054px">277.35 MB</div>
<div class="a nzb" style="top:2055px;color:#21c621">NZB</div>
<div class="a cb" style="top:2061.5px"></div>
<div class="a row" style="left:438px;top:2088px;width:3370px;background:#d8eafc"></div>
<div class="a bdg bb" style="top:2088px">ePub</div>
<div class="a t tt" style="left:445px;top:2088px">Sophie Kinsella - Verras me</div>
<div class="a num" style="top:2088px;background:#5aa9f6">26</div>
<div class="a t rt" style="left:3027px;top:2088px">Roman</div>
<div class="a t rt" style="left:3214px;top:2088px">Truman</div>
<div class="a t rt" style="left:3386px;top:2087px">10 hours, 22 minutes</div>
<div class="a t rt" style="left:3603px;top:2087px">11.3 MB</div>
<div class="a nzb" style="top:2088px;color:#1f8fd2">NZB</div>
<div class="a cb" style="top:2094.5px"></div>
<div class="a row" style="left:438px;top:2121px;width:3370px;background:#d8eafc"></div>
<div class="a bdg bb" style="top:2121px">x264HD</div>
<div class="a t tt" style="left:445px;top:2121px">HOMELAND (2018) S07E04 1080p AMZN-WEB-DL x264 DD+5.1 NL Subs</div>
<div class="a num" style="top:2121px;background:#5aa9f6">55</div>
<div class="a t rt" style="left:3027px;top:2121px">Television</div>
<div class="a t rt" style="left:3214px;top:2121px">Jane</div>
<div class="a t rt" style="left:3386px;top:2120px">10 hours, 42 minutes</div>
<div class="a t rt" style="left:3603px;top:2120px">4.47 GB</div>
<div class="a nzb" style="top:2121px;color:#1f8fd2">NZB</div>
<div class="a cb" style="top:2127.5px"></div>
<div class="a row" style="left:438px;top:2154px;width:3370px;background:#d8eafc"></div>
<div class="a bdg bb" style="top:2154px">x264HD</div>
<div class="a num" style="top:2154px;background:#5aa9f6"></div>
<div class="a" style="left:2900px;top:2158.8px;width:66px;height:22px;border-radius:6px;background:#7fd27f;border:1.5px solid #9ccf9c;box-sizing:border-box"></div>
<div class="a si" style="left:8px;top:75px;width:345px;background:#ececec"></div>
<div class="a ic" style="left:15px;top:78px"><svg width="24" height="24" viewBox="0 0 24 24"><rect x="1" y="19" width="22" height="4" fill="#5fb04a"/><path d="M4 11 L12 4 L20 11 V20 H4Z" fill="#f4f0e8" stroke="#b0a090" stroke-width=".8"/><path d="M1 12 L12 2.5 L23 12 L20.5 13.5 L12 6.5 L3.5 13.5Z" fill="#d8903a" stroke="#a86a28" stroke-width=".6"/><rect x="10" y="14" width="4" height="7" fill="#8a8a8a"/></svg></div>
<div class="a st" style="left:46.7px;top:75px">Reset filters</div>
<div class="a si" style="left:8px;top:108px;width:345px;background:#c8c8c8"></div>
<div class="a ic" style="left:15px;top:111px"><svg width="24" height="24" viewBox="0 0 24 24"><defs><radialGradient id="hg" cx=".4" cy=".3" r=".8"><stop offset="0" stop-color="#6cc8ff"/><stop offset="1" stop-color="#1688d8"/></radialGradient></defs><circle cx="12" cy="12" r="11.5" fill="url(#hg)"/><path d="M8.3 9.2 Q8.5 5.5 12.2 5.5 Q15.8 5.6 15.8 8.6 Q15.8 10.6 13.4 11.8 Q12.4 12.4 12.4 14.2" fill="none" stroke="#fff" stroke-width="2.4"/><circle cx="12.4" cy="18" r="1.5" fill="#fff"/></svg></div>
<div class="a st" style="left:46.7px;top:108px">Documentation</div>
<div class="a sh" style="left:0;top:146px;width:353px;border-radius:0 7px 7px 0"></div>
<div class="a ht" style="left:0;top:146px;width:353px;text-align:center">Filters</div>
<div class="a sb" style="left:321px;top:150px;width:26px"></div>
<svg class="a" style="left:327.8px;top:156.8px" width="12.2" height="8.2" viewBox="-1 -1 12.2 8.2"><path d="M0 6.2 L5.1 0 L10.2 6.2" fill="none" stroke="#c4c4c4" stroke-width="1.3"/></svg>
<div class="a si" style="left:8px;top:183px;width:345px;background:#d8eafc"></div>
<div class="a ic" style="left:15px;top:186px"><svg width="24" height="24" viewBox="0 0 24 24"><rect x="4" y="1" width="16" height="22" fill="#555d60"/><rect x="7" y="3" width="10" height="8.5" fill="#4cbf5a"/><rect x="7" y="3" width="10" height="4" fill="#5ab0e0"/><rect x="7" y="12.5" width="10" height="8.5" fill="#4cbf5a"/><rect x="7" y="12.5" width="10" height="4" fill="#5ab0e0"/><g fill="#8a9294"><rect x="4.8" y="2" width="1.4" height="1.4"/><rect x="4.8" y="5" width="1.4" height="1.4"/><rect x="4.8" y="8" width="1.4" height="1.4"/><rect x="4.8" y="11" width="1.4" height="1.4"/><rect x="4.8" y="14" width="1.4" height="1.4"/><rect x="4.8" y="17" width="1.4" height="1.4"/><rect x="4.8" y="20" width="1.4" height="1.4"/><rect x="17.8" y="2" width="1.4" height="1.4"/><rect x="17.8" y="5" width="1.4" height="1.4"/><rect x="17.8" y="8" width="1.4" height="1.4"/><rect x="17.8" y="11" width="1.4" height="1.4"/><rect x="17.8" y="14" width="1.4" height="1.4"/><rect x="17.8" y="17" width="1.4" height="1.4"/><rect x="17.8" y="20" width="1.4" height="1.4"/></g></svg></div>
<div class="a st" style="left:47.2px;top:183px">Image</div>
<svg class="a" style="left:296px;top:191.3px" width="9" height="9" viewBox="0 0 9 9"><path d="M4.5 0.3 V8.7 M0.3 4.5 H8.7" stroke="#79a6d8" stroke-width="2"/></svg>
<div class="a gbtn" style="left:324px;top:186px;background:#5aaef8;border-color:#0d5aa0"></div>
<svg class="a" style="left:331.5px;top:194.8px" width="12.5" height="7" viewBox="-1 -1 12.5 7"><path d="M0 5 L5.25 0 L10.5 5" fill="none" stroke="#0b3766" stroke-width="1.7"/></svg>
<div class="a si" style="left:23px;top:216px;width:330px;background:#d8eafc"></div>
<div class="a ic" style="left:30px;top:219px"><svg width="24" height="24" viewBox="0 0 24 24"><path d="M0.5 4 H9 L11 6 H23.5 V21.5 Q23.5 22.5 22.5 22.5 H1.5 Q0.5 22.5 0.5 21.5Z" fill="#17557e"/><rect x="0.5" y="7" width="23" height="15.5" rx="1" fill="#1e6a9a"/><path d="M4 10 L13 14 L4 18" fill="none" stroke="#8ed0f0" stroke-width="1.6"/><path d="M14 9 L21 19 M21 9 L14 19" stroke="#5fb8e8" stroke-width="1.4"/></svg></div>
<div class="a st" style="left:62.2px;top:216px">DivX</div>
<svg class="a" style="left:327.6px;top:224.3px" width="9" height="9" viewBox="0 0 9 9"><path d="M4.5 0.3 V8.7 M0.3 4.5 H8.7" stroke="#79a6d8" stroke-width="2"/></svg>
<div class="a si" style="left:23px;top:249px;width:330px;background:#d8eafc"></div>
<div class="a ic" style="left:30px;top:252px"><svg width="24" height="24" viewBox="0 0 24 24"><circle cx="12" cy="12" r="11" fill="#e8e8e8"/><path d="M12 1 A11 11 0 0 1 23 12" stroke="#6ac06a" stroke-width="2.5" fill="none"/><path d="M1 12 A11 11 0 0 1 12 1" stroke="#e07070" stroke-width="2.5" fill="none"/><path d="M23 12 A11 11 0 0 1 12 23" stroke="#e8d060" stroke-width="2.5" fill="none"/><circle cx="12" cy="12" r="7" fill="#2a6ad0"/><path d="M9 8.5 L16.5 12 L9 15.5Z" fill="#fff"/></svg></div>
<div class="a st" style="left:62.2px;top:249px">WMV</div>
<svg class="a" style="left:327.6px;top:257.3px" width="9" height="9" viewBox="0 0 9 9"><path d="M4.5 0.3 V8.7 M0.3 4.5 H8.7" stroke="#79a6d8" stroke-width="2"/></svg>
<div class="a si" style="left:23px;top:282px;width:330px;background:#d8eafc"></div>
<div class="a ic" style="left:30px;top:285px"><svg width="24" height="24" viewBox="0 0 24 24"><rect x="2" y="8" width="20" height="15" rx="2" fill="#2a2a2a"/><path d="M2 7 L20 2 L21.5 6 L3 10.5Z" fill="#505050"/><path d="M5 6 L7 9 M9 5 L11 8 M13 4 L15 7 M17 3 L19 6" stroke="#ddd" stroke-width="1.2"/><text x="12" y="19" font-size="6" font-family="Liberation Sans" font-weight="bold" fill="#bbb" text-anchor="middle">MPG</text></svg></div>
<div class="a st" style="left:62.2px;top:282px">MPEG</div>
<svg class="a" style="left:327.6px;top:290.3px" width="9" height="9" viewBox="0 0 9 9"><path d="M4.5 0.3 V8.7 M0.3 4.5 H8.7" stroke="#79a6d8" stroke-width="2"/></svg>
<div class="a si" style="left:23px;top:315px;width:330px;background:#d8eafc"></div>
<div class="a ic" style="left:30px;top:318px"><svg width="24" height="24" viewBox="0 0 24 24"><circle cx="12" cy="12" r="11" fill="#d8d8d8" stroke="#a8a8a8" stroke-width=".8"/><circle cx="12" cy="12" r="2.5" fill="#f4f4f4" stroke="#aaa" stroke-width=".6"/><rect x="0.5" y="8" width="15" height="8" rx="1.5" fill="#6a6a6a"/><text x="8" y="14.5" font-size="6.5" font-family="Liberation Sans" font-weight="bold" fill="#fff" text-anchor="middle">DVD</text><circle cx="18.5" cy="18.5" r="5" fill="#3cb83c"/><path d="M18.5 15.5 V21.5 M15.5 18.5 H21.5" stroke="#fff" stroke-width="1.8"/></svg></div>
<div class="a st" style="left:62.2px;top:315px">DVD</div>
<svg class="a" style="left:327.6px;top:323.3px" width="9" height="9" viewBox="0 0 9 9"><path d="M4.5 0.3 V8.7 M0.3 4.5 H8.7" stroke="#79a6d8" stroke-width="2"/></svg>
<div class="a si" style="left:23px;top:348px;width:330px;background:#d8eafc"></div>
<div class="a ic" style="left:30px;top:351px"><svg width="24" height="24" viewBox="0 0 24 24"><rect x="0.5" y="3" width="23" height="18" rx="3" fill="#4a4a4a"/><rect x="1.5" y="4" width="21" height="8" rx="2" fill="#6a6a6a"/><text x="12" y="17.5" font-size="12.5" font-family="Liberation Sans" font-weight="bold" fill="#f0f0f0" text-anchor="middle">HD</text></svg></div>
<div class="a st" style="left:62.2px;top:348px">HD</div>
<svg class="a" style="left:327.6px;top:356.3px" width="9" height="9" viewBox="0 0 9 9"><path d="M4.5 0.3 V8.7 M0.3 4.5 H8.7" stroke="#79a6d8" stroke-width="2"/></svg>
<div class="a si" style="left:23px;top:381px;width:330px;background:#d8eafc"></div>
<div class="a ic" style="left:30px;top:384px"><svg width="24" height="24" viewBox="0 0 24 24"><path d="M6 1 L12 7 L18 1" stroke="#6a7a88" stroke-width="1.3" fill="none"/><rect x="1" y="7" width="22" height="16" rx="1" fill="#3a4a58"/><rect x="2.5" y="8.5" width="19" height="11" fill="#5cb0f0"/><rect x="2.5" y="8.5" width="19" height="4" fill="#8ccaf8"/></svg></div>
<div class="a st" style="left:62.2px;top:381px">Series</div>
<svg class="a" style="left:327.6px;top:389.3px" width="9" height="9" viewBox="0 0 9 9"><path d="M4.5 0.3 V8.7 M0.3 4.5 H8.7" stroke="#79a6d8" stroke-width="2"/></svg>
<div class="a si" style="left:23px;top:414px;width:330px;background:#d8eafc"></div>
<div class="a ic" style="left:30px;top:417px"><svg width="24" height="24" viewBox="0 0 24 24"><rect x="3" y="1" width="18" height="22" rx="1.5" fill="#3a70a8"/><rect x="5.5" y="1.5" width="15" height="20" rx="1" fill="#6a9ed0"/><rect x="5.5" y="1.5" width="15" height="20" rx="1" fill="none" stroke="#3f76ae" stroke-width=".8"/><rect x="8.5" y="5" width="9" height="1.5" fill="#c8dcf0"/></svg></div>
<div class="a st" style="left:62.2px;top:414px">Books</div>
<svg class="a" style="left:296px;top:422.3px" width="9" height="9" viewBox="0 0 9 9"><path d="M4.5 0.3 V8.7 M0.3 4.5 H8.7" stroke="#79a6d8" stroke-width="2"/></svg>
<div class="a gbtn" style="left:324px;top:417px;background:#5aaef8;border-color:#0d5aa0"></div>
<svg class="a" style="left:331.5px;top:425.8px" width="12.5" height="7" viewBox="-1 -1 12.5 7"><path d="M0 5 L5.25 0 L10.5 5" fill="none" stroke="#0b3766" stroke-width="1.7"/></svg>
<div class="a si" style="left:38px;top:447px;width:315px;background:#d8eafc"></div>
<div class="a ic" style="left:45px;top:450px"><svg width="24" height="24" viewBox="0 0 24 24"><rect x="3" y="1" width="18" height="22" rx="1.5" fill="#3a70a8"/><rect x="5.5" y="1.5" width="15" height="20" rx="1" fill="#6a9ed0"/><rect x="5.5" y="1.5" width="15" height="20" rx="1" fill="none" stroke="#3f76ae" stroke-width=".8"/><rect x="8.5" y="5" width="9" height="1.5" fill="#c8dcf0"/></svg></div>
<div class="a st" style="left:77.2px;top:447px">Dutch</div>
<svg class="a" style="left:327.6px;top:455.3px" width="9" height="9" viewBox="0 0 9 9"><path d="M4.5 0.3 V8.7 M0.3 4.5 H8.7" stroke="#79a6d8" stroke-width="2"/></svg>
<div class="a si" style="left:38px;top:480px;width:315px;background:#d8eafc"></div>
<div class="a ic" style="left:45px;top:483px"><svg width="24" height="24" viewBox="0 0 24 24"><rect x="3" y="1" width="18" height="22" rx="1.5" fill="#3a70a8"/><rect x="5.5" y="1.5" width="15" height="20" rx="1" fill="#6a9ed0"/><rect x="5.5" y="1.5" width="15" height="20" rx="1" fill="none" stroke="#3f76ae" stroke-width=".8"/><rect x="8.5" y="5" width="9" height="1.5" fill="#c8dcf0"/></svg></div>
<div class="a st" style="left:77.2px;top:480px">English</div>
<svg class="a" style="left:327.6px;top:488.3px" width="9" height="9" viewBox="0 0 9 9"><path d="M4.5 0.3 V8.7 M0.3 4.5 H8.7" stroke="#79a6d8" stroke-width="2"/></svg>
<div class="a si" style="left:38px;top:513px;width:315px;background:#d8eafc"></div>
<div class="a ic" style="left:45px;top:516px"><svg width="24" height="24" viewBox="0 0 24 24"><rect x="3" y="1" width="18" height="22" rx="1.5" fill="#3a70a8"/><rect x="5.5" y="1.5" width="15" height="20" rx="1" fill="#6a9ed0"/><rect x="5.5" y="1.5" width="15" height="20" rx="1" fill="none" stroke="#3f76ae" stroke-width=".8"/><rect x="8.5" y="5" width="9" height="1.5" fill="#c8dcf0"/></svg></div>
<div class="a st" style="left:77.2px;top:513px">Others</div>
<svg class="a" style="left:327.6px;top:521.3px" width="9" height="9" viewBox="0 0 9 9"><path d="M4.5 0.3 V8.7 M0.3 4.5 H8.7" stroke="#79a6d8" stroke-width="2"/></svg>
<div class="a si" style="left:23px;top:546px;width:330px;background:#d8eafc"></div>
<div class="a ic" style="left:30px;top:549px"><svg width="24" height="24" viewBox="0 0 24 24"><g fill="#e39ad9"><circle cx="12" cy="7.6" r="7.2"/><rect x="9.2" y="13" width="5.6" height="10.8" rx="1"/><rect x="6.3" y="15.9" width="11.4" height="5" rx="1"/></g><g fill="#fbd6f5"><circle cx="12" cy="7.6" r="6.2"/><rect x="10.2" y="13.4" width="3.6" height="9.6"/><rect x="7.3" y="16.9" width="9.4" height="3"/></g><circle cx="12" cy="7.6" r="2.3" fill="#ead8f2" stroke="#e39ad9" stroke-width=".9"/></svg></div>
<div class="a st" style="left:62.2px;top:546px">Erotica</div>
<svg class="a" style="left:296px;top:554.3px" width="9" height="9" viewBox="0 0 9 9"><path d="M4.5 0.3 V8.7 M0.3 4.5 H8.7" stroke="#79a6d8" stroke-width="2"/></svg>
<div class="a gbtn" style="left:324px;top:549px;background:#5aaef8;border-color:#0d5aa0"></div>
<svg class="a" style="left:331.5px;top:557.8px" width="12.5" height="7" viewBox="-1 -1 12.5 7"><path d="M0 5 L5.25 0 L10.5 5" fill="none" stroke="#0b3766" stroke-width="1.7"/></svg>
<div class="a si" style="left:38px;top:579px;width:315px;background:#d8eafc"></div>
<div class="a ic" style="left:45px;top:582px"><svg width="24" height="24" viewBox="0 0 24 24"><g fill="#e39ad9"><circle cx="12" cy="7.6" r="7.2"/><rect x="9.2" y="13" width="5.6" height="10.8" rx="1"/><rect x="6.3" y="15.9" width="11.4" height="5" rx="1"/></g><g fill="#fbd6f5"><circle cx="12" cy="7.6" r="6.2"/><rect x="10.2" y="13.4" width="3.6" height="9.6"/><rect x="7.3" y="16.9" width="9.4" height="3"/></g><circle cx="12" cy="7.6" r="2.3" fill="#ead8f2" stroke="#e39ad9" stroke-width=".9"/></svg></div>
<div class="a st" style="left:77.2px;top:579px">Hetero</div>
<svg class="a" style="left:327.6px;top:587.3px" width="9" height="9" viewBox="0 0 9 9"><path d="M4.5 0.3 V8.7 M0.3 4.5 H8.7" stroke="#79a6d8" stroke-width="2"/></svg>
<div class="a si" style="left:38px;top:612px;width:315px;background:#d8eafc"></div>
<div class="a ic" style="left:45px;top:615px"><svg width="24" height="24" viewBox="0 0 24 24"><g fill="#e39ad9"><circle cx="12" cy="7.6" r="7.2"/><rect x="9.2" y="13" width="5.6" height="10.8" rx="1"/><rect x="6.3" y="15.9" width="11.4" height="5" rx="1"/></g><g fill="#fbd6f5"><circle cx="12" cy="7.6" r="6.2"/><rect x="10.2" y="13.4" width="3.6" height="9.6"/><rect x="7.3" y="16.9" width="9.4" height="3"/></g><circle cx="12" cy="7.6" r="2.3" fill="#ead8f2" stroke="#e39ad9" stroke-width=".9"/></svg></div>
<div class="a st" style="left:77.2px;top:612px">Gay male</div>
<svg class="a" style="left:327.6px;top:620.3px" width="9" height="9" viewBox="0 0 9 9"><path d="M4.5 0.3 V8.7 M0.3 4.5 H8.7" stroke="#79a6d8" stroke-width="2"/></svg>
<div class="a si" style="left:38px;top:645px;width:315px;background:#d8eafc"></div>
<div class="a ic" style="left:45px;top:648px"><svg width="24" height="24" viewBox="0 0 24 24"><g fill="#e39ad9"><circle cx="12" cy="7.6" r="7.2"/><rect x="9.2" y="13" width="5.6" height="10.8" rx="1"/><rect x="6.3" y="15.9" width="11.4" height="5" rx="1"/></g><g fill="#fbd6f5"><circle cx="12" cy="7.6" r="6.2"/><rect x="10.2" y="13.4" width="3.6" height="9.6"/><rect x="7.3" y="16.9" width="9.4" height="3"/></g><circle cx="12" cy="7.6" r="2.3" fill="#ead8f2" stroke="#e39ad9" stroke-width=".9"/></svg></div>
<div class="a st" style="left:77.2px;top:645px">Gay female</div>
<svg class="a" style="left:327.6px;top:653.3px" width="9" height="9" viewBox="0 0 9 9"><path d="M4.5 0.3 V8.7 M0.3 4.5 H8.7" stroke="#79a6d8" stroke-width="2"/></svg>
<div class="a si" style="left:38px;top:678px;width:315px;background:#d8eafc"></div>
<div class="a ic" style="left:45px;top:681px"><svg width="24" height="24" viewBox="0 0 24 24"><g fill="#e39ad9"><circle cx="12" cy="7.6" r="7.2"/><rect x="9.2" y="13" width="5.6" height="10.8" rx="1"/><rect x="6.3" y="15.9" width="11.4" height="5" rx="1"/></g><g fill="#fbd6f5"><circle cx="12" cy="7.6" r="6.2"/><rect x="10.2" y="13.4" width="3.6" height="9.6"/><rect x="7.3" y="16.9" width="9.4" height="3"/></g><circle cx="12" cy="7.6" r="2.3" fill="#ead8f2" stroke="#e39ad9" stroke-width=".9"/></svg></div>
<div class="a st" style="left:77.2px;top:678px">Bi</div>
<svg class="a" style="left:327.6px;top:686.3px" width="9" height="9" viewBox="0 0 9 9"><path d="M4.5 0.3 V8.7 M0.3 4.5 H8.7" stroke="#79a6d8" stroke-width="2"/></svg>
<div class="a si" style="left:8px;top:715.5px;width:345px;background:#fff8d3"></div>
<div class="a ic" style="left:15px;top:718.5px"><svg width="24" height="24" viewBox="0 0 24 24"><path d="M8 3 H22 V17" fill="none" stroke="#8a8a8a" stroke-width="3.2"/><path d="M8 3 H22 V17" fill="none" stroke="#c8c8c8" stroke-width="1.2"/><path d="M8 3 V18" stroke="#8a8a8a" stroke-width="3.2"/><ellipse cx="5" cy="19.5" rx="4.5" ry="3" fill="#8a8a8a" transform="rotate(-20 5 19.5)"/><ellipse cx="18.5" cy="18" rx="4.5" ry="3" fill="#8a8a8a" transform="rotate(-20 18.5 18)"/></svg></div>
<div class="a st" style="left:47.2px;top:715.5px">Sounds</div>
<svg class="a" style="left:296px;top:723.8px" width="9" height="9" viewBox="0 0 9 9"><path d="M4.5 0.3 V8.7 M0.3 4.5 H8.7" stroke="#e6d88c" stroke-width="2"/></svg>
<div class="a gbtn" style="left:324px;top:718.5px;background:#f2d47a;border-color:#d2a232"></div>
<svg class="a" style="left:331.5px;top:727.3px" width="12.5" height="7" viewBox="-1 -1 12.5 7"><path d="M0 5 L5.25 0 L10.5 5" fill="none" stroke="#5a4410" stroke-width="1.7"/></svg>
<div class="a si" style="left:23px;top:748.5px;width:330px;background:#fff8d3"></div>
<div class="a ic" style="left:30px;top:751.5px"><svg width="24" height="24" viewBox="0 0 24 24"><path d="M8 3 H22 V17" fill="none" stroke="#8a8a8a" stroke-width="3.2"/><path d="M8 3 H22 V17" fill="none" stroke="#c8c8c8" stroke-width="1.2"/><path d="M8 3 V18" stroke="#8a8a8a" stroke-width="3.2"/><ellipse cx="5" cy="19.5" rx="4.5" ry="3" fill="#8a8a8a" transform="rotate(-20 5 19.5)"/><ellipse cx="18.5" cy="18" rx="4.5" ry="3" fill="#8a8a8a" transform="rotate(-20 18.5 18)"/></svg></div>
<div class="a st" style="left:62.2px;top:748.5px">Compressed</div>
<svg class="a" style="left:327.6px;top:756.8px" width="9" height="9" viewBox="0 0 9 9"><path d="M4.5 0.3 V8.7 M0.3 4.5 H8.7" stroke="#e6d88c" stroke-width="2"/></svg>
<div class="a si" style="left:23px;top:781.5px;width:330px;background:#fff8d3"></div>
<div class="a ic" style="left:30px;top:784.5px"><svg width="24" height="24" viewBox="0 0 24 24"><path d="M8 3 H22 V17" fill="none" stroke="#8a8a8a" stroke-width="3.2"/><path d="M8 3 H22 V17" fill="none" stroke="#c8c8c8" stroke-width="1.2"/><path d="M8 3 V18" stroke="#8a8a8a" stroke-width="3.2"/><ellipse cx="5" cy="19.5" rx="4.5" ry="3" fill="#8a8a8a" transform="rotate(-20 5 19.5)"/><ellipse cx="18.5" cy="18" rx="4.5" ry="3" fill="#8a8a8a" transform="rotate(-20 18.5 18)"/></svg></div>
<div class="a st" style="left:62.2px;top:781.5px">Lossless</div>
<svg class="a" style="left:327.6px;top:789.8px" width="9" height="9" viewBox="0 0 9 9"><path d="M4.5 0.3 V8.7 M0.3 4.5 H8.7" stroke="#e6d88c" stroke-width="2"/></svg>
<div class="a si" style="left:8px;top:819px;width:345px;background:#cafdca"></div>
<div class="a ic" style="left:15px;top:822px"><svg width="24" height="24" viewBox="0 0 24 24"><path d="M1.5 0.5 Q4 4 7.5 8.5" stroke="#5a7a5a" stroke-width="1.1" fill="none"/><path d="M1.2 15 Q1.5 9 7 8.2 Q10 7.8 12.5 8.6 Q15 7.4 18 8 Q23.5 9.5 23.5 17 Q23.5 20.5 21 20.2 Q18.5 19.8 16.5 15.8 Q12 15.6 9.5 16.5 Q8.5 23.5 4.5 23.2 Q0.8 22.8 1.2 15Z" fill="#f2f2f2" stroke="#8c8c8c" stroke-width="1"/><path d="M5.8 10.5 V15.5 M3.3 13 H8.3" stroke="#3a9a4a" stroke-width="1.5"/><circle cx="18.5" cy="11" r="1.6" fill="#e03838"/><circle cx="14.5" cy="11.6" r="1.3" fill="#4a78d8"/><circle cx="16.5" cy="13.4" r="1" fill="#c8c8c8"/></svg></div>
<div class="a st" style="left:47.2px;top:819px">Games</div>
<svg class="a" style="left:296px;top:827.3px" width="9" height="9" viewBox="0 0 9 9"><path d="M4.5 0.3 V8.7 M0.3 4.5 H8.7" stroke="#96de96" stroke-width="2"/></svg>
<div class="a gbtn" style="left:324px;top:822px;background:#6ee66e;border-color:#1a9a1a"></div>
<svg class="a" style="left:331.5px;top:830.8px" width="12.5" height="7" viewBox="-1 -1 12.5 7"><path d="M0 5 L5.25 0 L10.5 5" fill="none" stroke="#0c4a0c" stroke-width="1.7"/></svg>
<div class="a si" style="left:23px;top:852px;width:330px;background:#cafdca"></div>
<div class="a ic" style="left:30px;top:855px"><svg width="24" height="24" viewBox="0 0 24 24"><ellipse cx="12" cy="17" rx="10" ry="3.5" fill="#c8d8e8" opacity=".8"/><path d="M9 4 L17 15 H5Z" fill="#2a4ab0"/><path d="M11 6 L15 14 H11Z" fill="#6a8ae0"/></svg></div>
<div class="a st" style="left:62.2px;top:852px">Windows</div>
<svg class="a" style="left:327.6px;top:860.3px" width="9" height="9" viewBox="0 0 9 9"><path d="M4.5 0.3 V8.7 M0.3 4.5 H8.7" stroke="#96de96" stroke-width="2"/></svg>
<div class="a si" style="left:23px;top:885px;width:330px;background:#cafdca"></div>
<div class="a ic" style="left:30px;top:888px"><svg width="24" height="24" viewBox="0 0 24 24"><ellipse cx="12" cy="12" rx="9" ry="10" fill="#2a2a2a"/><ellipse cx="12" cy="13" rx="7" ry="8" fill="#f0f0f0"/><circle cx="9.5" cy="8" r="1.2" fill="#222"/><circle cx="14.5" cy="8" r="1.2" fill="#222"/><path d="M10 10.5 L12 12 L14 10.5Z" fill="#f0b020"/><ellipse cx="6" cy="20.5" rx="5" ry="2.8" fill="#f0c020"/><ellipse cx="18" cy="20.5" rx="5" ry="2.8" fill="#f0c020"/></svg></div>
<div class="a st" style="left:62.2px;top:885px">Mac / Linux</div>
<svg class="a" style="left:327.6px;top:893.3px" width="9" height="9" viewBox="0 0 9 9"><path d="M4.5 0.3 V8.7 M0.3 4.5 H8.7" stroke="#96de96" stroke-width="2"/></svg>
<div class="a si" style="left:23px;top:918px;width:330px;background:#cafdca"></div>
<div class="a ic" style="left:30px;top:921px"><svg width="24" height="24" viewBox="0 0 24 24"><path d="M5 1 Q13 0 18 2 V23 Q12 22 6 23 Q3 12 5 1Z" fill="#111"/><path d="M14 3 Q17 3 17 6 V20" stroke="#555" stroke-width="1.2" fill="none"/></svg></div>
<div class="a st" style="left:62.2px;top:918px">Playstation</div>
<svg class="a" style="left:327.6px;top:926.3px" width="9" height="9" viewBox="0 0 9 9"><path d="M4.5 0.3 V8.7 M0.3 4.5 H8.7" stroke="#96de96" stroke-width="2"/></svg>
<div class="a si" style="left:23px;top:951px;width:330px;background:#cafdca"></div>
<div class="a ic" style="left:30px;top:954px"><svg width="24" height="24" viewBox="0 0 24 24"><rect x="9" y="1" width="6" height="22" rx="1" fill="#9a9a9a"/><rect x="10" y="2" width="4" height="20" fill="#c8c8c8"/><rect x="10" y="17" width="4" height="3" fill="#666"/></svg></div>
<div class="a st" style="left:62.2px;top:951px">XBox</div>
<svg class="a" style="left:327.6px;top:959.3px" width="9" height="9" viewBox="0 0 9 9"><path d="M4.5 0.3 V8.7 M0.3 4.5 H8.7" stroke="#96de96" stroke-width="2"/></svg>
<div class="a si" style="left:23px;top:984px;width:330px;background:#cafdca"></div>
<div class="a ic" style="left:30px;top:987px"><svg width="24" height="24" viewBox="0 0 24 24"><rect x="1" y="1" width="22" height="22" rx="1.5" fill="#e8e8e8" stroke="#a8a8a8" stroke-width=".8"/><rect x="5" y="3" width="14" height="8" fill="#b8b8b8"/><rect x="5" y="13" width="14" height="8" fill="#b8b8b8"/><rect x="1" y="11" width="22" height="2" fill="#999"/></svg></div>
<div class="a st" style="left:62.2px;top:984px">Nintendo</div>
<svg class="a" style="left:327.6px;top:992.3px" width="9" height="9" viewBox="0 0 9 9"><path d="M4.5 0.3 V8.7 M0.3 4.5 H8.7" stroke="#96de96" stroke-width="2"/></svg>
<div class="a si" style="left:23px;top:1017px;width:330px;background:#cafdca"></div>
<div class="a ic" style="left:30px;top:1020px"><svg width="24" height="24" viewBox="0 0 24 24"><rect x="4" y="1" width="16" height="22" rx="2" fill="#d8d8d8" stroke="#999" stroke-width=".8"/><rect x="6" y="3" width="12" height="13" fill="#1a78c8"/><rect x="6" y="3" width="12" height="5" fill="#4aa8e8"/><rect x="7" y="19" width="10" height="1.5" fill="#888"/></svg></div>
<div class="a st" style="left:62.2px;top:1017px">Smartphone / PDA</div>
<svg class="a" style="left:327.6px;top:1025.3px" width="9" height="9" viewBox="0 0 9 9"><path d="M4.5 0.3 V8.7 M0.3 4.5 H8.7" stroke="#96de96" stroke-width="2"/></svg>
<div class="a si" style="left:8px;top:1054.5px;width:345px;background:#fddbdb"></div>
<div class="a ic" style="left:15px;top:1057.5px"><svg width="24" height="24" viewBox="0 0 24 24"><rect x="1" y="3" width="22" height="18" fill="#f8f8fc" stroke="#6a80b8" stroke-width="1.2"/><rect x="1" y="3" width="22" height="4" fill="#88a4e0"/></svg></div>
<div class="a st" style="left:47.2px;top:1054.5px">Applications</div>
<svg class="a" style="left:296px;top:1062.8px" width="9" height="9" viewBox="0 0 9 9"><path d="M4.5 0.3 V8.7 M0.3 4.5 H8.7" stroke="#e8a2a2" stroke-width="2"/></svg>
<div class="a gbtn" style="left:324px;top:1057.5px;background:#f08080;border-color:#c42424"></div>
<svg class="a" style="left:331.5px;top:1066.3px" width="12.5" height="7" viewBox="-1 -1 12.5 7"><path d="M0 5 L5.25 0 L10.5 5" fill="none" stroke="#5a0c0c" stroke-width="1.7"/></svg>
<div class="a si" style="left:23px;top:1087.5px;width:330px;background:#fddbdb"></div>
<div class="a ic" style="left:30px;top:1090.5px"><svg width="24" height="24" viewBox="0 0 24 24"><path d="M5 5 Q8 3 11 4 L9.5 11 Q7 10 3.8 11.5Z" fill="#e05030"/><path d="M12 4 Q15 5 19.5 3 L18 10 Q14 11.5 10.5 11Z" fill="#40a040"/><path d="M3.5 12.5 Q7 11 9.3 12 L8 19 Q5 18 2 20Z" fill="#3070d0"/><path d="M10.3 12 Q14 12.5 17.8 11 L16.5 18 Q13 19.5 9 19Z" fill="#f0c020"/></svg></div>
<div class="a st" style="left:62.2px;top:1087.5px">Windows</div>
<svg class="a" style="left:327.6px;top:1095.8px" width="9" height="9" viewBox="0 0 9 9"><path d="M4.5 0.3 V8.7 M0.3 4.5 H8.7" stroke="#e8a2a2" stroke-width="2"/></svg>
<div class="a si" style="left:23px;top:1120.5px;width:330px;background:#fddbdb"></div>
<div class="a ic" style="left:30px;top:1123.5px"><svg width="24" height="24" viewBox="0 0 24 24"><ellipse cx="12" cy="12" rx="9" ry="10" fill="#2a2a2a"/><ellipse cx="12" cy="13" rx="7" ry="8" fill="#f0f0f0"/><circle cx="9.5" cy="8" r="1.2" fill="#222"/><circle cx="14.5" cy="8" r="1.2" fill="#222"/><path d="M10 10.5 L12 12 L14 10.5Z" fill="#f0b020"/><ellipse cx="6" cy="20.5" rx="5" ry="2.8" fill="#f0c020"/><ellipse cx="18" cy="20.5" rx="5" ry="2.8" fill="#f0c020"/></svg></div>
<div class="a st" style="left:62.2px;top:1120.5px">Mac / Linux / OS2</div>
<svg class="a" style="left:327.6px;top:1128.8px" width="9" height="9" viewBox="0 0 9 9"><path d="M4.5 0.3 V8.7 M0.3 4.5 H8.7" stroke="#e8a2a2" stroke-width="2"/></svg>
<div class="a si" style="left:23px;top:1153.5px;width:330px;background:#fddbdb"></div>
<div class="a ic" style="left:30px;top:1156.5px"><svg width="24" height="24" viewBox="0 0 24 24"><rect x="5" y="1" width="14" height="22" rx="2" fill="#f4f4f4" stroke="#9a9a9a" stroke-width=".9"/><rect x="7" y="3" width="10" height="8" fill="#a8c8e8"/><circle cx="12" cy="16.5" r="4" fill="#d8d8d8" stroke="#b8b8b8" stroke-width=".6"/><circle cx="12" cy="16.5" r="1.5" fill="#f4f4f4"/></svg></div>
<div class="a st" style="left:62.2px;top:1153.5px">Navigation</div>
<svg class="a" style="left:327.6px;top:1161.8px" width="9" height="9" viewBox="0 0 9 9"><path d="M4.5 0.3 V8.7 M0.3 4.5 H8.7" stroke="#e8a2a2" stroke-width="2"/></svg>
<div class="a si" style="left:23px;top:1186.5px;width:330px;background:#fddbdb"></div>
<div class="a ic" style="left:30px;top:1189.5px"><svg width="24" height="24" viewBox="0 0 24 24"><rect x="4" y="1" width="16" height="22" rx="2" fill="#d8d8d8" stroke="#999" stroke-width=".8"/><rect x="6" y="3" width="12" height="13" fill="#1a78c8"/><rect x="6" y="3" width="12" height="5" fill="#4aa8e8"/><rect x="7" y="19" width="10" height="1.5" fill="#888"/></svg></div>
<div class="a st" style="left:62.2px;top:1186.5px">Windows Phone</div>
<svg class="a" style="left:327.6px;top:1194.8px" width="9" height="9" viewBox="0 0 9 9"><path d="M4.5 0.3 V8.7 M0.3 4.5 H8.7" stroke="#e8a2a2" stroke-width="2"/></svg>
<div class="a si" style="left:23px;top:1219.5px;width:330px;background:#fddbdb"></div>
<div class="a ic" style="left:30px;top:1222.5px"><svg width="24" height="24" viewBox="0 0 24 24"><rect x="0.5" y="2" width="23" height="15" rx="1" fill="#111"/><rect x="1.5" y="3" width="21" height="12" fill="#2a2a2a"/><path d="M9 17 L8 21 H16 L15 17Z" fill="#b8b8b8"/><rect x="6" y="21" width="12" height="1.5" fill="#999"/></svg></div>
<div class="a st" style="left:62.2px;top:1219.5px">Apple iOS</div>
<svg class="a" style="left:327.6px;top:1227.8px" width="9" height="9" viewBox="0 0 9 9"><path d="M4.5 0.3 V8.7 M0.3 4.5 H8.7" stroke="#e8a2a2" stroke-width="2"/></svg>
<div class="a si" style="left:23px;top:1252.5px;width:330px;background:#fddbdb"></div>
<div class="a ic" style="left:30px;top:1255.5px"><svg width="24" height="24" viewBox="0 0 24 24"><rect x="15" y="0.5" width="1.5" height="5" fill="#888"/><rect x="6" y="4" width="12" height="19" rx="1.5" fill="#c8c8c8" stroke="#8a8a8a" stroke-width=".8"/><rect x="8" y="6" width="8" height="6" fill="#3a90d8"/><g fill="#888"><rect x="8" y="14" width="2" height="1.5"/><rect x="11" y="14" width="2" height="1.5"/><rect x="14" y="14" width="2" height="1.5"/><rect x="8" y="17" width="2" height="1.5"/><rect x="11" y="17" width="2" height="1.5"/><rect x="14" y="17" width="2" height="1.5"/><rect x="8" y="20" width="2" height="1.5"/><rect x="11" y="20" width="2" height="1.5"/><rect x="14" y="20" width="2" height="1.5"/></g></svg></div>
<div class="a st" style="left:62.2px;top:1252.5px">Android</div>
<svg class="a" style="left:327.6px;top:1260.8px" width="9" height="9" viewBox="0 0 9 9"><path d="M4.5 0.3 V8.7 M0.3 4.5 H8.7" stroke="#e8a2a2" stroke-width="2"/></svg>
<div class="a sh" style="left:0;top:1290px;width:353px;border-radius:0 7px 7px 0"></div>
<div class="a ht" style="left:0;top:1290px;width:353px;text-align:center">Maintenance</div>
<div class="a sb" style="left:321px;top:1295px;width:26px"></div>
<svg class="a" style="left:327.8px;top:1301.4px" width="12.2" height="8.2" viewBox="-1 -1 12.2 8.2"><path d="M0 6.2 L5.1 0 L10.2 6.2" fill="none" stroke="#c4c4c4" stroke-width="1.3"/></svg>
<div class="a" style="left:0;top:1325px;width:360px;text-align:center;font-size:16.5px;line-height:30px;color:#222">Last update: 1 minute</div>
<div class="a" style="left:3815px;top:0;width:25px;height:2160px;background:#f1f1f1"></div>
<div class="a" style="left:3817px;top:25px;width:21px;height:1331px;background:#c1c1c1"></div>
<svg class="a" style="left:3821px;top:9px" width="13" height="8" viewBox="0 0 13 8"><path d="M1 7 L6.5 1 L12 7Z" fill="#a3a3a3"/></svg>
<svg class="a" style="left:3821px;top:2143px" width="13" height="8" viewBox="0 0 13 8"><path d="M1 1 L6.5 7 L12 1Z" fill="#505050"/></svg></body></html>
